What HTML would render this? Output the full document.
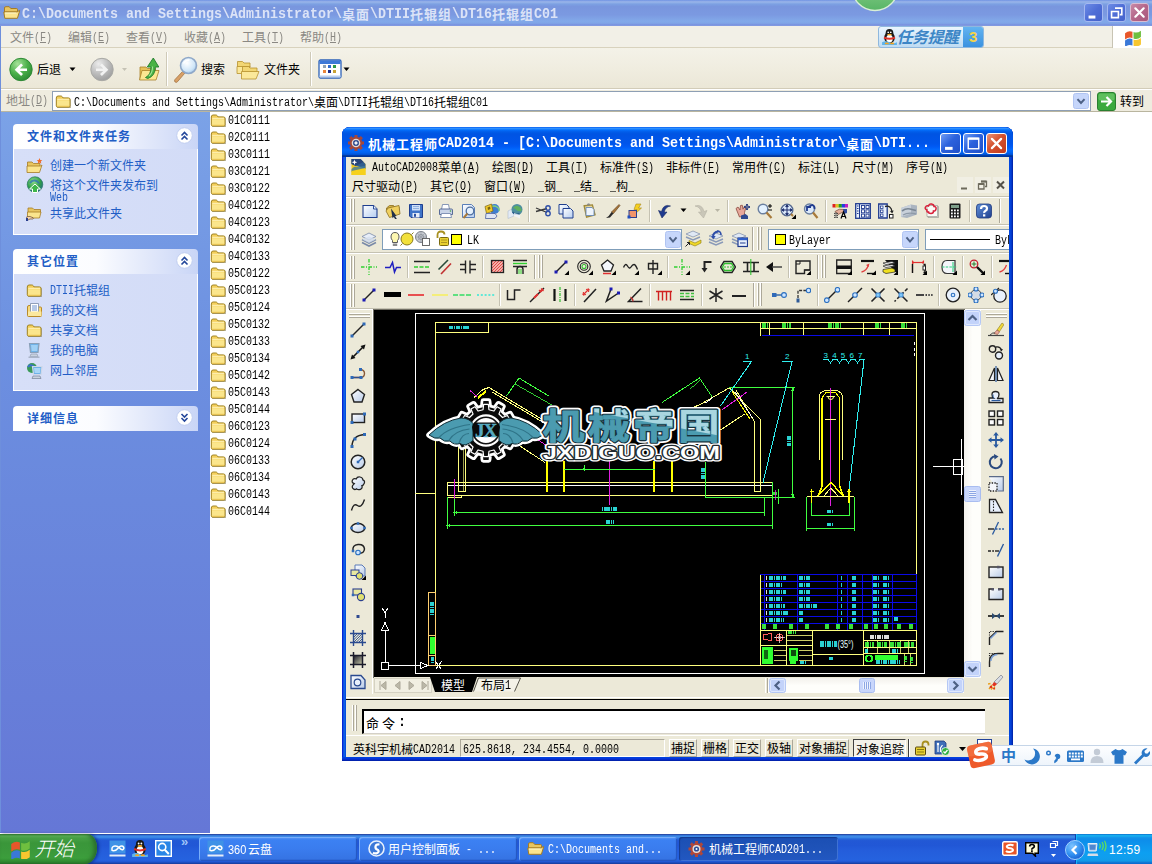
<!DOCTYPE html>
<html><head><meta charset="utf-8"><title>desktop</title><style>
*{margin:0;padding:0;box-sizing:border-box}
html,body{width:1152px;height:864px;overflow:hidden;background:#fff}
body{position:relative;font-family:"Liberation Sans",sans-serif;font-size:12px}
.a{position:absolute}
.m{position:absolute;font-family:"Liberation Mono",monospace;white-space:pre;transform-origin:0 0;line-height:1}
.t{font-family:"Liberation Sans","Noto Sans CJK SC",sans-serif}
u{text-decoration:underline;text-underline-offset:1px}
</style></head><body>
<div class="a" style="left:0px;top:0px;width:1152px;height:26px;background:linear-gradient(to bottom,#7697e7 0%,#7e9ee3 3%,#94afe8 6%,#97b4e9 8%,#82a5e4 14%,#7c9fe2 17%,#7996de 25%,#7b99e1 56%,#82a9e9 81%,#80a5e7 89%,#7b96e1 94%,#7a93df 97%,#8ea3e2 100%)"></div>
<svg class="a" style="left:3px;top:4px" width="18" height="17" viewBox="0 0 18 17"><path d="M1.5 4q0-1.3 1.3-1.3h3.4l1.6 1.8h5.6q1.1 0 1.1 1.1v2.4h-13z" fill="#e8c560" stroke="#a67c24" stroke-width="1"/><path d="M.8 8h13.2l2.6-1.6v.6l-2.2 7.3h-12.6z" fill="#fbe48d" stroke="#a67c24" stroke-width="1"/><path d="M2 9h11.5" stroke="#fff8cf" stroke-width="1"/></svg>
<span class="m" style="left:22px;top:7px;font-size:14px;color:#dbe3f7;transform:scaleX(0.9524);font-weight:bold">C:\Documents and Settings\Administrator\</span><svg class="a" style="left:342px;top:7px" width="30" height="16" overflow="visible" aria-label="桌面"><text class="t" x="0" y="11.5" font-size="13" font-weight="bold" letter-spacing="1" fill="#dbe3f7">桌面</text></svg><span class="m" style="left:370px;top:7px;font-size:14px;color:#dbe3f7;transform:scaleX(0.9524);font-weight:bold">\DTII</span><svg class="a" style="left:410px;top:7px" width="44" height="16" overflow="visible" aria-label="托辊组"><text class="t" x="0" y="11.5" font-size="13" font-weight="bold" letter-spacing="1" fill="#dbe3f7">托辊组</text></svg><span class="m" style="left:452px;top:7px;font-size:14px;color:#dbe3f7;transform:scaleX(0.9524);font-weight:bold">\DT16</span><svg class="a" style="left:492px;top:7px" width="44" height="16" overflow="visible" aria-label="托辊组"><text class="t" x="0" y="11.5" font-size="13" font-weight="bold" letter-spacing="1" fill="#dbe3f7">托辊组</text></svg><span class="m" style="left:534px;top:7px;font-size:14px;color:#dbe3f7;transform:scaleX(0.9524);font-weight:bold">C01</span>
<svg class="a" style="left:850px;top:0px" width="52" height="14" viewBox="0 0 52 14"><defs><linearGradient id="gc" x1="0" y1="0" x2="0" y2="1"><stop offset="0" stop-color="#a9dba1"/><stop offset="1" stop-color="#58b566"/></linearGradient></defs><circle cx="25" cy="-12.500" r="23" fill="url(#gc)" stroke="#d9efd6" stroke-width="1.400"/></svg>
<div class="a" style="left:1084px;top:3px;width:19px;height:19px;border-radius:3px;border:1px solid #a4b8f0;background:linear-gradient(135deg,#6c8ce6,#4f6ed6 50%,#4562cc)"><svg width="19" height="19" style="position:absolute;left:-1px;top:-1px"><rect x="4.56" y="12.54" width="6.84" height="3" fill="#fff"/></svg></div>
<div class="a" style="left:1107px;top:3px;width:19px;height:19px;border-radius:3px;border:1px solid #a4b8f0;background:linear-gradient(135deg,#6c8ce6,#4f6ed6 50%,#4562cc)"><svg width="19" height="19" style="position:absolute;left:-1px;top:-1px"><path d="M7.98 5.13h6.84v6.46h-2M4.56 8.55h6.84v6.08h-6.84z" fill="none" stroke="#fff" stroke-width="1.6"/></svg></div>
<div class="a" style="left:1130px;top:3px;width:19px;height:19px;border-radius:3px;border:1px solid #d9bdd2;background:linear-gradient(135deg,#c88aa6,#b5668a 50%,#a9587c)"><svg width="19" height="19" style="position:absolute;left:-1px;top:-1px"><path d="M5.32 5.32L13.68 13.68M13.68 5.32L5.32 13.68" stroke="#fff" stroke-width="2.2" stroke-linecap="round"/></svg></div>
<div class="a" style="left:0px;top:26px;width:1152px;height:22px;background:#f2f0e7;border-bottom:1px solid #d8d2bd"></div>
<svg class="a" style="left:10px;top:31px" width="26" height="15" overflow="visible" aria-label="文件"><text class="t" x="0" y="10.5" font-size="12" fill="#8a8883">文件</text></svg><span class="m" style="left:34px;top:32px;font-size:12px;color:#8a8883;transform:scaleX(0.8333)">(<u>F</u>)</span>
<svg class="a" style="left:68px;top:31px" width="26" height="15" overflow="visible" aria-label="编辑"><text class="t" x="0" y="10.5" font-size="12" fill="#8a8883">编辑</text></svg><span class="m" style="left:92px;top:32px;font-size:12px;color:#8a8883;transform:scaleX(0.8333)">(<u>E</u>)</span>
<svg class="a" style="left:126px;top:31px" width="26" height="15" overflow="visible" aria-label="查看"><text class="t" x="0" y="10.5" font-size="12" fill="#8a8883">查看</text></svg><span class="m" style="left:150px;top:32px;font-size:12px;color:#8a8883;transform:scaleX(0.8333)">(<u>V</u>)</span>
<svg class="a" style="left:184px;top:31px" width="26" height="15" overflow="visible" aria-label="收藏"><text class="t" x="0" y="10.5" font-size="12" fill="#8a8883">收藏</text></svg><span class="m" style="left:208px;top:32px;font-size:12px;color:#8a8883;transform:scaleX(0.8333)">(<u>A</u>)</span>
<svg class="a" style="left:242px;top:31px" width="26" height="15" overflow="visible" aria-label="工具"><text class="t" x="0" y="10.5" font-size="12" fill="#8a8883">工具</text></svg><span class="m" style="left:266px;top:32px;font-size:12px;color:#8a8883;transform:scaleX(0.8333)">(<u>T</u>)</span>
<svg class="a" style="left:300px;top:31px" width="26" height="15" overflow="visible" aria-label="帮助"><text class="t" x="0" y="10.5" font-size="12" fill="#8a8883">帮助</text></svg><span class="m" style="left:324px;top:32px;font-size:12px;color:#8a8883;transform:scaleX(0.8333)">(<u>H</u>)</span>
<div class="a" style="left:878px;top:26px;width:106px;height:22px;background:linear-gradient(#eaf5fd,#bfdcf3);border:1px solid #8fb8de;border-radius:3px"></div><div class="a" style="left:963px;top:27px;width:20px;height:20px;background:linear-gradient(#62b3f0,#3b92e0);border-radius:0 2px 2px 0"></div><svg class="a" style="left:881px;top:28px" width="17" height="17" viewBox="0 0 16 16"><ellipse cx="8" cy="9" rx="5" ry="5.500" fill="#1a1a1a"/><circle cx="8" cy="4.500" r="3.600" fill="#1a1a1a"/><ellipse cx="8" cy="10" rx="3" ry="3.600" fill="#fff"/><ellipse cx="8" cy="6.200" rx="2.200" ry=".9" fill="#f5a623"/><circle cx="6.800" cy="4" r=".8" fill="#fff"/><circle cx="9.200" cy="4" r=".8" fill="#fff"/><path d="M3 8q5 2.500 10 0l.5 1.800q-5.500 2.500-11 0z" fill="#e0342a"/><path d="M1 13.500q3.500-2 7 0t7 0v2.500h-14z" fill="#5fb4ec"/><ellipse cx="5.500" cy="14.500" rx="2" ry=".9" fill="#f5a623"/><ellipse cx="10.500" cy="14.500" rx="2" ry=".9" fill="#f5a623"/></svg><svg class="a" style="left:900px;top:29px" width="64" height="19" overflow="visible" aria-label="任务提醒"><g fill="#3d86c6" transform="skewX(-14)"><text class="t" x="0" y="14" font-size="16" font-weight="bold" letter-spacing="-0.5" fill="#3d86c6">任务提醒</text></g></svg><span class="a" style="left:969px;top:28px;font:bold 15px 'Liberation Sans',sans-serif;color:#f5d34a">3</span>
<div class="a" style="left:1112px;top:26px;width:40px;height:22px;background:#fff;border-left:1px solid #c8c4b4"></div>
<svg class="a" style="left:1124px;top:28px" width="18" height="18" viewBox="0 0 17 17"><g transform="skewY(-8) translate(0,2.5)"><path d="M1 2.5q3.5-2.4 7-.3v6q-3.5-2-7 .3z" fill="#e8562a"/><path d="M9 2.6q3.5 2 7-.3v6q-3.5 2.3-7 .3z" fill="#6fbf3f"/><path d="M1 9.5q3.5-2.4 7-.3v6q-3.5-2-7 .3z" fill="#3a78d8"/><path d="M9 9.6q3.5 2 7-.3v6q-3.5 2.3-7 .3z" fill="#f7c62f"/></g></svg>
<div class="a" style="left:0px;top:48px;width:1152px;height:41px;background:linear-gradient(to bottom,#f4f2e8 0%,#f0ede0 50%,#ebe7d7 100%);border-bottom:1px solid #d2ccb8"></div>
<svg class="a" style="left:9px;top:57px" width="24" height="25" viewBox="0 0 24 25"><defs><radialGradient id="u1" cx="35%" cy="25%" r="80%"><stop offset="0" stop-color="#a6e29a"/><stop offset=".55" stop-color="#4bb04a"/><stop offset="1" stop-color="#2c8a34"/></radialGradient></defs><circle cx="12" cy="12.5" r="11.2" fill="url(#u1)" stroke="#2f8a36" stroke-width="1"/><path d="M18 11.5h-7.2l3.2-3.2-1.9-1.9-6.4 6.3 6.4 6.3 1.9-1.9-3.2-3.2h7.2z" fill="#fff"/></svg>
<svg class="a" style="left:37px;top:63px" width="26" height="15" overflow="visible" aria-label="后退"><text class="t" x="0" y="10.5" font-size="12" fill="#000">后退</text></svg>
<svg class="a" style="left:69px;top:67px" width="8" height="5" viewBox="0 0 8 5"><path d="M0.5 0.5h6l-3 3.5z" fill="#000"/></svg>
<svg class="a" style="left:90px;top:57px" width="24" height="25" viewBox="0 0 24 25"><defs><radialGradient id="u2" cx="35%" cy="25%" r="80%"><stop offset="0" stop-color="#ececec"/><stop offset=".55" stop-color="#bdbdbd"/><stop offset="1" stop-color="#9c9c9c"/></radialGradient></defs><circle cx="12" cy="12.5" r="11.2" fill="url(#u2)" stroke="#a9a9a5" stroke-width="1"/><path d="M6 11.5h7.2l-3.2-3.2 1.9-1.9 6.4 6.3-6.4 6.3-1.9-1.9 3.2-3.2h-7.2z" fill="#f2f2f2"/></svg>
<svg class="a" style="left:121px;top:67px" width="8" height="5" viewBox="0 0 8 5"><path d="M1 1h5l-2.500 3z" fill="#c5c2b5"/></svg>
<svg class="a" style="left:138px;top:56px" width="22" height="25" viewBox="0 0 22 25"><path d="M2 11h6l1.500 1.500h8v11h-15.500z" fill="#e6c258" stroke="#a8802a" stroke-width=".8"/><path d="M1.500 24l2.500-9.500h17l-3 9.500z" fill="#fbe792" stroke="#a8802a" stroke-width=".8"/><path d="M7.500 21.500q5.500-2.500 5.500-10.500h-3.700l6-9 5.500 9h-3.500q0 9-7.500 11.500z" fill="#49b345" stroke="#1f7a2a" stroke-width=".9"/><path d="M14.500 10.500q.3 6-3.500 9.500" stroke="#a4e497" stroke-width="1.100" fill="none"/></svg>
<div class="a" style="left:166px;top:52px;width:1px;height:34px;background:#cfcab8;border-right:1px solid #fff;width:2px"></div>
<svg class="a" style="left:172px;top:56px" width="28" height="28" viewBox="0 0 28 28"><defs><radialGradient id="u3" cx="40%" cy="35%" r="70%"><stop offset="0" stop-color="#fff"/><stop offset=".7" stop-color="#cfe6f8"/><stop offset="1" stop-color="#9cc4ea"/></radialGradient></defs><path d="M10.500 15.500l-7.500 8q-1.200 1.600.2 2.600 1.300.8 2.500-.6l7-8.200z" fill="#d9a066" stroke="#9a6a3a" stroke-width=".7"/><circle cx="16.500" cy="9.500" r="8" fill="url(#u3)" stroke="#8fa8c8" stroke-width="1.600"/><path d="M11.500 7.500q2-3.500 6-3.500" stroke="#fff" stroke-width="1.500" fill="none"/></svg>
<svg class="a" style="left:201px;top:63px" width="26" height="15" overflow="visible" aria-label="搜索"><text class="t" x="0" y="10.5" font-size="12" fill="#000">搜索</text></svg>
<svg class="a" style="left:236px;top:58px" width="24" height="22" viewBox="0 0 24 22"><path d="M1.500 3.500h5l1.500 1.500h6v4h-12.500z" fill="#f2d673" stroke="#b8922f" stroke-width=".8"/><path d="M1 8.500h13l-1.500 7h-11.500z" fill="#fbe89a" stroke="#b8922f" stroke-width=".8"/><path d="M6.500 8.500h6l1.500 1.500h7v4h-14.500z" fill="#f2d673" stroke="#b8922f" stroke-width=".8"/><path d="M5.500 13.500h17.500l-3 7.500h-14.500z" fill="#fbe89a" stroke="#b8922f" stroke-width=".8"/></svg>
<svg class="a" style="left:264px;top:63px" width="38" height="15" overflow="visible" aria-label="文件夹"><text class="t" x="0" y="10.5" font-size="12" fill="#000">文件夹</text></svg>
<div class="a" style="left:310px;top:52px;width:1px;height:34px;background:#cfcab8;border-right:1px solid #fff;width:2px"></div>
<svg class="a" style="left:318px;top:59px" width="24" height="20" viewBox="0 0 24 20"><rect x="1" y="1" width="22" height="18" rx="1.500" fill="#fff" stroke="#2d62b8" stroke-width="1.300"/><rect x="1.500" y="1.500" width="21" height="3.500" fill="#3d79d8"/><rect x="1.500" y="16.500" width="21" height="2" fill="#bcd0ee"/><rect x="5" y="6" width="3" height="3" fill="#8fa3b4"/><rect x="10" y="6" width="3" height="3" fill="#2e6bd0"/><rect x="15" y="6" width="3" height="3" fill="#2f9a48"/><rect x="5" y="11" width="3" height="3" fill="#e9843a"/><rect x="10" y="11" width="3" height="3" fill="#1c2d8c"/><rect x="15" y="11" width="3" height="3" fill="#c9a233"/></svg>
<svg class="a" style="left:343px;top:67px" width="8" height="5" viewBox="0 0 8 5"><path d="M0.5 0.5h6l-3 3.5z" fill="#000"/></svg>
<div class="a" style="left:0px;top:89px;width:1152px;height:23px;background:#efecdf;border-top:1px solid #fff;border-bottom:1px solid #b9b59f"></div>
<svg class="a" style="left:6px;top:94px" width="26" height="15" overflow="visible" aria-label="地址"><text class="t" x="0" y="10.5" font-size="12" fill="#8a8883">地址</text></svg><span class="m" style="left:30px;top:95px;font-size:12px;color:#8a8883;transform:scaleX(0.8333)">(<u>D</u>)</span>
<div class="a" style="left:52px;top:91px;width:1039px;height:20px;background:#fff;border:1px solid #8e9fb4"></div>
<svg class="a" style="left:55px;top:93px" width="17" height="16" viewBox="0 0 17 16"><path d="M1.500 14.300v-9.300q0-2 1.800-2h2.700q1 0 1.700 1l.6.900h5.500q1.400 0 1.400 1.400v8z" fill="#6f5d1c" opacity=".55" transform="translate(.6 .7)"/><path d="M1.300 5q0-2 1.800-2h2.700q1 0 1.700 1l.6.900h5.400q1.400 0 1.400 1.400v6.500q0 1.200-1.200 1.200h-11.200q-1.200 0-1.200-1.200z" fill="#f4cf5a" stroke="#a08424" stroke-width="1"/><path d="M2 7.300h12.400v5.500q0 .7-.7.700h-11q-.7 0-.7-.7z" fill="#fbe68c"/><path d="M2.200 6.300h12" stroke="#fff4c0" stroke-width="1"/><path d="M2 13.300h12.300" stroke="#e9c24f" stroke-width="1"/></svg>
<span class="m" style="left:74px;top:97px;font-size:12px;color:#000;transform:scaleX(0.8333)">C:\Documents and Settings\Administrator\</span><svg class="a" style="left:314px;top:96px" width="26" height="15" overflow="visible" aria-label="桌面"><text class="t" x="0" y="10.5" font-size="12" fill="#000">桌面</text></svg><span class="m" style="left:338px;top:97px;font-size:12px;color:#000;transform:scaleX(0.8333)">\DTII</span><svg class="a" style="left:368px;top:96px" width="38" height="15" overflow="visible" aria-label="托辊组"><text class="t" x="0" y="10.5" font-size="12" fill="#000">托辊组</text></svg><span class="m" style="left:404px;top:97px;font-size:12px;color:#000;transform:scaleX(0.8333)">\DT16</span><svg class="a" style="left:434px;top:96px" width="38" height="15" overflow="visible" aria-label="托辊组"><text class="t" x="0" y="10.5" font-size="12" fill="#000">托辊组</text></svg><span class="m" style="left:470px;top:97px;font-size:12px;color:#000;transform:scaleX(0.8333)">C01</span>
<svg class="a" style="left:1073px;top:93px" width="16" height="16" viewBox="0 0 16 16" style="left:1073px;top:93px;background:linear-gradient(#d9e4fd,#b4c9f7);border-radius:2px"><rect x=".5" y=".5" width="15" height="15" rx="2" fill="#c6d6fb" stroke="#b0c4f2"/><path d="M4.48 6.08l3.52 3.84l3.52 -3.84" fill="none" stroke="#4d6185" stroke-width="2"/></svg>
<svg class="a" style="left:1097px;top:92px" width="19" height="19" viewBox="0 0 19 19"><rect x=".5" y=".5" width="18" height="18" rx="2.500" fill="#3ba93e" stroke="#2a7f2f"/><rect x="1.500" y="1.500" width="16" height="7" rx="2" fill="#6fc96b" opacity=".7"/><path d="M4 9.500h9M9.500 5l4.500 4.500-4.500 4.500" fill="none" stroke="#fff" stroke-width="2.200"/></svg>
<svg class="a" style="left:1120px;top:95px" width="26" height="15" overflow="visible" aria-label="转到"><text class="t" x="0" y="10.5" font-size="12" fill="#000">转到</text></svg>
<div class="a" style="left:0px;top:112px;width:210px;height:722px;background:linear-gradient(to bottom,#7ba2e7 0%,#6c8fe0 35%,#6577d6 100%)"></div>
<div class="a" style="left:0px;top:26px;width:1px;height:808px;background:#6e8fdc"></div>
<div class="a" style="left:13px;top:124px;width:185px;height:25px;background:linear-gradient(to right,#ffffff 0%,#fbfcff 45%,#c9d5f6 100%);border-radius:4px 4px 0 0"></div>
<svg class="a" style="left:27px;top:130px" width="106" height="15" overflow="visible" aria-label="文件和文件夹任务"><text class="t" x="0" y="10.5" font-size="12" font-weight="bold" letter-spacing="1" fill="#215dc6">文件和文件夹任务</text></svg>
<svg class="a" style="left:176px;top:127px" width="17" height="17" viewBox="0 0 17 17"><circle cx="8.500" cy="8.500" r="7.800" fill="#fff" stroke="#c1cef0" stroke-width="1"/><path d="M5.500 8.500l3-3 3 3M5.500 12.500l3-3 3 3" fill="none" stroke="#23469a" stroke-width="1.600"/></svg>
<div class="a" style="left:13px;top:149px;width:185px;height:86px;background:linear-gradient(to right,#d7dff8,#d3dcf7);border:1px solid #fff;border-top:0"></div>
<svg class="a" style="left:26px;top:157px" width="17" height="17" viewBox="0 0 17 17"><path d="M1.500 5h4.500l1.500 1.500h6.500v3h-12.500z" fill="#e8c560" stroke="#a67c24" stroke-width=".8"/><path d="M1 9h13.500l1.500-1-2.500 7.500h-12.500z" fill="#fbe48d" stroke="#a67c24" stroke-width=".8"/><path d="M13.500 1l.8 2 2 .2-1.500 1.300.5 2-1.800-1.100-1.800 1.100.5-2-1.500-1.300 2-.2z" fill="#f06a28"/></svg>
<svg class="a" style="left:50px;top:159px" width="98" height="15" overflow="visible" aria-label="创建一个新文件夹"><text class="t" x="0" y="10.5" font-size="12" fill="#215dc6">创建一个新文件夹</text></svg>
<svg class="a" style="left:26px;top:176px" width="18" height="18" viewBox="0 0 18 18"><defs><radialGradient id="u4" cx="40%" cy="30%" r="75%"><stop offset="0" stop-color="#8fe08a"/><stop offset=".6" stop-color="#2f9d4a"/><stop offset="1" stop-color="#1f6a8a"/></radialGradient></defs><circle cx="9" cy="8.500" r="7.800" fill="url(#u4)" stroke="#1f6a5a" stroke-width=".6"/><path d="M4 7q2-3 5-2.500t4 3" stroke="#2a65c0" stroke-width="2" fill="none" opacity=".7"/><path d="M9 8l5.500 5h-3v3.500h-5v-3.500h-3z" fill="#3fb64a" stroke="#fff" stroke-width="1"/></svg>
<svg class="a" style="left:50px;top:179px" width="110" height="15" overflow="visible" aria-label="将这个文件夹发布到"><text class="t" x="0" y="10.5" font-size="12" fill="#215dc6">将这个文件夹发布到</text></svg>
<span class="m" style="left:50px;top:192px;font-size:12px;color:#215dc6;transform:scaleX(0.8333)">Web</span>
<svg class="a" style="left:26px;top:204px" width="17" height="17" viewBox="0 0 17 17"><path d="M2 4h4.500l1.500 1.500h6.500v3h-12.500z" fill="#e8c560" stroke="#a67c24" stroke-width=".8"/><path d="M1.500 8h13.500l-1.500 6h-12z" fill="#fbe48d" stroke="#a67c24" stroke-width=".8"/><path d="M0 13.500q2-1.500 4-1l3 1.200q1 .6 0 1.300h-3l-3 1.500z" fill="#f3d3b0" stroke="#6a4a30" stroke-width=".7"/><path d="M0 14h2v3h-2z" fill="#2a3f8f"/></svg>
<svg class="a" style="left:50px;top:207px" width="74" height="15" overflow="visible" aria-label="共享此文件夹"><text class="t" x="0" y="10.5" font-size="12" fill="#215dc6">共享此文件夹</text></svg>
<div class="a" style="left:13px;top:249px;width:185px;height:25px;background:linear-gradient(to right,#ffffff 0%,#fbfcff 45%,#c9d5f6 100%);border-radius:4px 4px 0 0"></div>
<svg class="a" style="left:27px;top:255px" width="54" height="15" overflow="visible" aria-label="其它位置"><text class="t" x="0" y="10.5" font-size="12" font-weight="bold" letter-spacing="1" fill="#215dc6">其它位置</text></svg>
<svg class="a" style="left:176px;top:252px" width="17" height="17" viewBox="0 0 17 17"><circle cx="8.500" cy="8.500" r="7.800" fill="#fff" stroke="#c1cef0" stroke-width="1"/><path d="M5.500 8.500l3-3 3 3M5.500 12.500l3-3 3 3" fill="none" stroke="#23469a" stroke-width="1.600"/></svg>
<div class="a" style="left:13px;top:274px;width:185px;height:117px;background:linear-gradient(to right,#d7dff8,#d3dcf7);border:1px solid #fff;border-top:0"></div>
<svg class="a" style="left:26px;top:282px" width="17" height="16" viewBox="0 0 17 16"><path d="M1.500 14.300v-9.300q0-2 1.800-2h2.700q1 0 1.700 1l.6.900h5.500q1.400 0 1.400 1.400v8z" fill="#6f5d1c" opacity=".55" transform="translate(.6 .7)"/><path d="M1.300 5q0-2 1.800-2h2.700q1 0 1.700 1l.6.900h5.400q1.400 0 1.400 1.400v6.500q0 1.200-1.200 1.200h-11.200q-1.200 0-1.200-1.200z" fill="#f4cf5a" stroke="#a08424" stroke-width="1"/><path d="M2 7.300h12.400v5.500q0 .7-.7.700h-11q-.7 0-.7-.7z" fill="#fbe68c"/><path d="M2.200 6.300h12" stroke="#fff4c0" stroke-width="1"/><path d="M2 13.300h12.300" stroke="#e9c24f" stroke-width="1"/></svg>
<span class="m" style="left:50px;top:285px;font-size:12px;color:#215dc6;transform:scaleX(0.8333)">DTII</span><svg class="a" style="left:74px;top:284px" width="38" height="15" overflow="visible" aria-label="托辊组"><text class="t" x="0" y="10.5" font-size="12" fill="#215dc6">托辊组</text></svg>
<svg class="a" style="left:26px;top:302px" width="17" height="16" viewBox="0 0 17 16"><path d="M1.500 5q0-1.500 1.500-1.500h3l1.500 1.500h7q1 0 1 1v7.500q0 1-1 1h-12q-1 0-1-1z" fill="#f7d97a" stroke="#b88a2a"/><path d="M4.500 1.500h8v9h-8z" fill="#fff" stroke="#7a8aa8" stroke-width=".8"/><path d="M6 4h5M6 6h5M6 8h5" stroke="#5b87c9" stroke-width=".9"/><path d="M2 9.500h13.500v4q0 .5-.5.500h-12.500q-.5 0-.5-.5z" fill="#fbe89e"/></svg>
<svg class="a" style="left:50px;top:304px" width="50" height="15" overflow="visible" aria-label="我的文档"><text class="t" x="0" y="10.5" font-size="12" fill="#215dc6">我的文档</text></svg>
<svg class="a" style="left:26px;top:322px" width="17" height="16" viewBox="0 0 17 16"><path d="M1.500 14.300v-9.300q0-2 1.800-2h2.700q1 0 1.700 1l.6.900h5.500q1.400 0 1.400 1.400v8z" fill="#6f5d1c" opacity=".55" transform="translate(.6 .7)"/><path d="M1.300 5q0-2 1.800-2h2.700q1 0 1.700 1l.6.900h5.400q1.400 0 1.400 1.400v6.500q0 1.200-1.200 1.200h-11.200q-1.200 0-1.200-1.200z" fill="#f4cf5a" stroke="#a08424" stroke-width="1"/><path d="M2 7.300h12.400v5.500q0 .7-.7.700h-11q-.7 0-.7-.7z" fill="#fbe68c"/><path d="M2.200 6.300h12" stroke="#fff4c0" stroke-width="1"/><path d="M2 13.300h12.300" stroke="#e9c24f" stroke-width="1"/></svg>
<svg class="a" style="left:50px;top:324px" width="50" height="15" overflow="visible" aria-label="共享文档"><text class="t" x="0" y="10.5" font-size="12" fill="#215dc6">共享文档</text></svg>
<svg class="a" style="left:26px;top:342px" width="17" height="17" viewBox="0 0 17 17"><path d="M3.500 1.500h9.500l-1 9h-7.500z" fill="#6fb2e8" stroke="#8aa0b8" stroke-width="1.200"/><path d="M5 3h6.800l-.6 6h-5.500z" fill="#9fd0f5"/><path d="M5 12h6l1 2.500h-8z" fill="#c9d3e0" stroke="#8a94a8" stroke-width=".6"/><path d="M2.500 14.500h11v1.500h-11z" fill="#aab4c8"/></svg>
<svg class="a" style="left:50px;top:344px" width="50" height="15" overflow="visible" aria-label="我的电脑"><text class="t" x="0" y="10.5" font-size="12" fill="#215dc6">我的电脑</text></svg>
<svg class="a" style="left:26px;top:362px" width="18" height="18" viewBox="0 0 18 18"><circle cx="6" cy="6" r="5" fill="#3a9a58"/><path d="M2 5q2-3 5-1t3 3" stroke="#3a6fd0" stroke-width="2" fill="none"/><path d="M6.500 4.500h9.500l-1 8h-7.500z" fill="#6fb2e8" stroke="#cfd8e8" stroke-width="1.200"/><path d="M8 6h6.500l-.6 5h-5.200z" fill="#a9d6f7"/><path d="M7 14h7l1 2.500h-9z" fill="#c9d3e0" stroke="#6a748a" stroke-width=".6"/></svg>
<svg class="a" style="left:50px;top:364px" width="50" height="15" overflow="visible" aria-label="网上邻居"><text class="t" x="0" y="10.5" font-size="12" fill="#215dc6">网上邻居</text></svg>
<div class="a" style="left:13px;top:406px;width:185px;height:25px;background:linear-gradient(to right,#ffffff 0%,#fbfcff 45%,#c9d5f6 100%);border-radius:4px 4px 0 0;border-radius:4px 4px 0 0"></div>
<svg class="a" style="left:27px;top:412px" width="54" height="15" overflow="visible" aria-label="详细信息"><text class="t" x="0" y="10.5" font-size="12" font-weight="bold" letter-spacing="1" fill="#215dc6">详细信息</text></svg>
<svg class="a" style="left:176px;top:409px" width="17" height="17" viewBox="0 0 17 17"><circle cx="8.500" cy="8.500" r="7.800" fill="#fff" stroke="#c1cef0" stroke-width="1"/><path d="M5.500 5l3 3 3-3M5.500 9l3 3 3-3" fill="none" stroke="#23469a" stroke-width="1.600"/></svg>
<svg class="a" style="left:210px;top:112px" width="17" height="16" viewBox="0 0 17 16"><path d="M1.500 14.300v-9.300q0-2 1.800-2h2.700q1 0 1.700 1l.6.900h5.500q1.400 0 1.400 1.400v8z" fill="#6f5d1c" opacity=".55" transform="translate(.6 .7)"/><path d="M1.300 5q0-2 1.800-2h2.700q1 0 1.700 1l.6.900h5.400q1.400 0 1.400 1.400v6.500q0 1.200-1.200 1.200h-11.200q-1.200 0-1.200-1.200z" fill="#f4cf5a" stroke="#a08424" stroke-width="1"/><path d="M2 7.300h12.400v5.500q0 .7-.7.700h-11q-.7 0-.7-.7z" fill="#fbe68c"/><path d="M2.200 6.300h12" stroke="#fff4c0" stroke-width="1"/><path d="M2 13.300h12.300" stroke="#e9c24f" stroke-width="1"/></svg>
<span class="m" style="left:228px;top:115px;font-size:12px;color:#000;transform:scaleX(0.8333)">01C0111</span>
<svg class="a" style="left:210px;top:129px" width="17" height="16" viewBox="0 0 17 16"><path d="M1.500 14.300v-9.300q0-2 1.800-2h2.700q1 0 1.700 1l.6.900h5.500q1.400 0 1.400 1.400v8z" fill="#6f5d1c" opacity=".55" transform="translate(.6 .7)"/><path d="M1.300 5q0-2 1.800-2h2.700q1 0 1.700 1l.6.900h5.400q1.400 0 1.400 1.400v6.500q0 1.200-1.200 1.200h-11.200q-1.200 0-1.200-1.200z" fill="#f4cf5a" stroke="#a08424" stroke-width="1"/><path d="M2 7.300h12.400v5.500q0 .7-.7.700h-11q-.7 0-.7-.7z" fill="#fbe68c"/><path d="M2.200 6.300h12" stroke="#fff4c0" stroke-width="1"/><path d="M2 13.300h12.300" stroke="#e9c24f" stroke-width="1"/></svg>
<span class="m" style="left:228px;top:132px;font-size:12px;color:#000;transform:scaleX(0.8333)">02C0111</span>
<svg class="a" style="left:210px;top:146px" width="17" height="16" viewBox="0 0 17 16"><path d="M1.500 14.300v-9.300q0-2 1.800-2h2.700q1 0 1.700 1l.6.900h5.500q1.400 0 1.400 1.400v8z" fill="#6f5d1c" opacity=".55" transform="translate(.6 .7)"/><path d="M1.300 5q0-2 1.800-2h2.700q1 0 1.700 1l.6.900h5.400q1.400 0 1.400 1.400v6.500q0 1.200-1.200 1.200h-11.200q-1.200 0-1.200-1.200z" fill="#f4cf5a" stroke="#a08424" stroke-width="1"/><path d="M2 7.300h12.400v5.500q0 .7-.7.700h-11q-.7 0-.7-.7z" fill="#fbe68c"/><path d="M2.200 6.300h12" stroke="#fff4c0" stroke-width="1"/><path d="M2 13.300h12.300" stroke="#e9c24f" stroke-width="1"/></svg>
<span class="m" style="left:228px;top:149px;font-size:12px;color:#000;transform:scaleX(0.8333)">03C0111</span>
<svg class="a" style="left:210px;top:163px" width="17" height="16" viewBox="0 0 17 16"><path d="M1.500 14.300v-9.300q0-2 1.800-2h2.700q1 0 1.700 1l.6.900h5.500q1.400 0 1.400 1.400v8z" fill="#6f5d1c" opacity=".55" transform="translate(.6 .7)"/><path d="M1.300 5q0-2 1.800-2h2.700q1 0 1.700 1l.6.900h5.400q1.400 0 1.400 1.400v6.500q0 1.200-1.200 1.200h-11.200q-1.200 0-1.200-1.200z" fill="#f4cf5a" stroke="#a08424" stroke-width="1"/><path d="M2 7.300h12.400v5.500q0 .7-.7.700h-11q-.7 0-.7-.7z" fill="#fbe68c"/><path d="M2.200 6.300h12" stroke="#fff4c0" stroke-width="1"/><path d="M2 13.300h12.300" stroke="#e9c24f" stroke-width="1"/></svg>
<span class="m" style="left:228px;top:166px;font-size:12px;color:#000;transform:scaleX(0.8333)">03C0121</span>
<svg class="a" style="left:210px;top:180px" width="17" height="16" viewBox="0 0 17 16"><path d="M1.500 14.300v-9.300q0-2 1.800-2h2.700q1 0 1.700 1l.6.900h5.500q1.400 0 1.400 1.400v8z" fill="#6f5d1c" opacity=".55" transform="translate(.6 .7)"/><path d="M1.300 5q0-2 1.800-2h2.700q1 0 1.700 1l.6.900h5.400q1.400 0 1.400 1.400v6.500q0 1.200-1.200 1.200h-11.200q-1.200 0-1.200-1.200z" fill="#f4cf5a" stroke="#a08424" stroke-width="1"/><path d="M2 7.300h12.400v5.500q0 .7-.7.700h-11q-.7 0-.7-.7z" fill="#fbe68c"/><path d="M2.200 6.300h12" stroke="#fff4c0" stroke-width="1"/><path d="M2 13.300h12.300" stroke="#e9c24f" stroke-width="1"/></svg>
<span class="m" style="left:228px;top:183px;font-size:12px;color:#000;transform:scaleX(0.8333)">03C0122</span>
<svg class="a" style="left:210px;top:197px" width="17" height="16" viewBox="0 0 17 16"><path d="M1.500 14.300v-9.300q0-2 1.800-2h2.700q1 0 1.700 1l.6.900h5.500q1.400 0 1.400 1.400v8z" fill="#6f5d1c" opacity=".55" transform="translate(.6 .7)"/><path d="M1.300 5q0-2 1.800-2h2.700q1 0 1.700 1l.6.900h5.400q1.400 0 1.400 1.400v6.500q0 1.200-1.200 1.200h-11.200q-1.200 0-1.200-1.200z" fill="#f4cf5a" stroke="#a08424" stroke-width="1"/><path d="M2 7.300h12.400v5.500q0 .7-.7.700h-11q-.7 0-.7-.7z" fill="#fbe68c"/><path d="M2.200 6.300h12" stroke="#fff4c0" stroke-width="1"/><path d="M2 13.300h12.300" stroke="#e9c24f" stroke-width="1"/></svg>
<span class="m" style="left:228px;top:200px;font-size:12px;color:#000;transform:scaleX(0.8333)">04C0122</span>
<svg class="a" style="left:210px;top:214px" width="17" height="16" viewBox="0 0 17 16"><path d="M1.500 14.300v-9.300q0-2 1.800-2h2.700q1 0 1.700 1l.6.900h5.500q1.400 0 1.400 1.400v8z" fill="#6f5d1c" opacity=".55" transform="translate(.6 .7)"/><path d="M1.300 5q0-2 1.800-2h2.700q1 0 1.700 1l.6.900h5.400q1.400 0 1.400 1.400v6.500q0 1.200-1.200 1.200h-11.200q-1.200 0-1.200-1.200z" fill="#f4cf5a" stroke="#a08424" stroke-width="1"/><path d="M2 7.300h12.400v5.500q0 .7-.7.700h-11q-.7 0-.7-.7z" fill="#fbe68c"/><path d="M2.200 6.300h12" stroke="#fff4c0" stroke-width="1"/><path d="M2 13.300h12.300" stroke="#e9c24f" stroke-width="1"/></svg>
<span class="m" style="left:228px;top:217px;font-size:12px;color:#000;transform:scaleX(0.8333)">04C0123</span>
<svg class="a" style="left:210px;top:231px" width="17" height="16" viewBox="0 0 17 16"><path d="M1.500 14.300v-9.300q0-2 1.800-2h2.700q1 0 1.700 1l.6.900h5.500q1.400 0 1.400 1.400v8z" fill="#6f5d1c" opacity=".55" transform="translate(.6 .7)"/><path d="M1.300 5q0-2 1.800-2h2.700q1 0 1.700 1l.6.900h5.400q1.400 0 1.400 1.400v6.500q0 1.200-1.200 1.200h-11.200q-1.200 0-1.200-1.200z" fill="#f4cf5a" stroke="#a08424" stroke-width="1"/><path d="M2 7.300h12.400v5.500q0 .7-.7.700h-11q-.7 0-.7-.7z" fill="#fbe68c"/><path d="M2.200 6.300h12" stroke="#fff4c0" stroke-width="1"/><path d="M2 13.300h12.300" stroke="#e9c24f" stroke-width="1"/></svg>
<span class="m" style="left:228px;top:234px;font-size:12px;color:#000;transform:scaleX(0.8333)">04C0132</span>
<svg class="a" style="left:210px;top:248px" width="17" height="16" viewBox="0 0 17 16"><path d="M1.500 14.300v-9.300q0-2 1.800-2h2.700q1 0 1.700 1l.6.900h5.500q1.400 0 1.400 1.400v8z" fill="#6f5d1c" opacity=".55" transform="translate(.6 .7)"/><path d="M1.300 5q0-2 1.800-2h2.700q1 0 1.700 1l.6.900h5.400q1.400 0 1.400 1.400v6.500q0 1.200-1.200 1.200h-11.200q-1.200 0-1.200-1.200z" fill="#f4cf5a" stroke="#a08424" stroke-width="1"/><path d="M2 7.300h12.400v5.500q0 .7-.7.700h-11q-.7 0-.7-.7z" fill="#fbe68c"/><path d="M2.200 6.300h12" stroke="#fff4c0" stroke-width="1"/><path d="M2 13.300h12.300" stroke="#e9c24f" stroke-width="1"/></svg>
<span class="m" style="left:228px;top:251px;font-size:12px;color:#000;transform:scaleX(0.8333)">04C0133</span>
<svg class="a" style="left:210px;top:265px" width="17" height="16" viewBox="0 0 17 16"><path d="M1.500 14.300v-9.300q0-2 1.800-2h2.700q1 0 1.700 1l.6.900h5.500q1.400 0 1.400 1.400v8z" fill="#6f5d1c" opacity=".55" transform="translate(.6 .7)"/><path d="M1.300 5q0-2 1.800-2h2.700q1 0 1.700 1l.6.900h5.400q1.400 0 1.400 1.400v6.500q0 1.200-1.200 1.200h-11.200q-1.200 0-1.200-1.200z" fill="#f4cf5a" stroke="#a08424" stroke-width="1"/><path d="M2 7.300h12.400v5.500q0 .7-.7.700h-11q-.7 0-.7-.7z" fill="#fbe68c"/><path d="M2.200 6.300h12" stroke="#fff4c0" stroke-width="1"/><path d="M2 13.300h12.300" stroke="#e9c24f" stroke-width="1"/></svg>
<span class="m" style="left:228px;top:268px;font-size:12px;color:#000;transform:scaleX(0.8333)">05C0122</span>
<svg class="a" style="left:210px;top:282px" width="17" height="16" viewBox="0 0 17 16"><path d="M1.500 14.300v-9.300q0-2 1.800-2h2.700q1 0 1.700 1l.6.900h5.500q1.400 0 1.400 1.400v8z" fill="#6f5d1c" opacity=".55" transform="translate(.6 .7)"/><path d="M1.300 5q0-2 1.800-2h2.700q1 0 1.700 1l.6.900h5.400q1.400 0 1.400 1.400v6.500q0 1.200-1.200 1.200h-11.200q-1.200 0-1.200-1.200z" fill="#f4cf5a" stroke="#a08424" stroke-width="1"/><path d="M2 7.300h12.400v5.500q0 .7-.7.700h-11q-.7 0-.7-.7z" fill="#fbe68c"/><path d="M2.200 6.300h12" stroke="#fff4c0" stroke-width="1"/><path d="M2 13.300h12.300" stroke="#e9c24f" stroke-width="1"/></svg>
<span class="m" style="left:228px;top:285px;font-size:12px;color:#000;transform:scaleX(0.8333)">05C0123</span>
<svg class="a" style="left:210px;top:299px" width="17" height="16" viewBox="0 0 17 16"><path d="M1.500 14.300v-9.300q0-2 1.800-2h2.700q1 0 1.700 1l.6.900h5.500q1.400 0 1.400 1.400v8z" fill="#6f5d1c" opacity=".55" transform="translate(.6 .7)"/><path d="M1.300 5q0-2 1.800-2h2.700q1 0 1.700 1l.6.900h5.400q1.400 0 1.400 1.400v6.500q0 1.200-1.200 1.200h-11.200q-1.200 0-1.200-1.200z" fill="#f4cf5a" stroke="#a08424" stroke-width="1"/><path d="M2 7.300h12.400v5.500q0 .7-.7.700h-11q-.7 0-.7-.7z" fill="#fbe68c"/><path d="M2.200 6.300h12" stroke="#fff4c0" stroke-width="1"/><path d="M2 13.300h12.300" stroke="#e9c24f" stroke-width="1"/></svg>
<span class="m" style="left:228px;top:302px;font-size:12px;color:#000;transform:scaleX(0.8333)">05C0124</span>
<svg class="a" style="left:210px;top:316px" width="17" height="16" viewBox="0 0 17 16"><path d="M1.500 14.300v-9.300q0-2 1.800-2h2.700q1 0 1.700 1l.6.900h5.500q1.400 0 1.400 1.400v8z" fill="#6f5d1c" opacity=".55" transform="translate(.6 .7)"/><path d="M1.300 5q0-2 1.800-2h2.700q1 0 1.700 1l.6.900h5.400q1.400 0 1.400 1.400v6.500q0 1.200-1.200 1.200h-11.200q-1.200 0-1.200-1.200z" fill="#f4cf5a" stroke="#a08424" stroke-width="1"/><path d="M2 7.300h12.400v5.500q0 .7-.7.700h-11q-.7 0-.7-.7z" fill="#fbe68c"/><path d="M2.200 6.300h12" stroke="#fff4c0" stroke-width="1"/><path d="M2 13.300h12.300" stroke="#e9c24f" stroke-width="1"/></svg>
<span class="m" style="left:228px;top:319px;font-size:12px;color:#000;transform:scaleX(0.8333)">05C0132</span>
<svg class="a" style="left:210px;top:333px" width="17" height="16" viewBox="0 0 17 16"><path d="M1.500 14.300v-9.300q0-2 1.800-2h2.700q1 0 1.700 1l.6.900h5.500q1.400 0 1.400 1.400v8z" fill="#6f5d1c" opacity=".55" transform="translate(.6 .7)"/><path d="M1.300 5q0-2 1.800-2h2.700q1 0 1.700 1l.6.900h5.400q1.400 0 1.400 1.400v6.500q0 1.200-1.200 1.200h-11.200q-1.200 0-1.200-1.200z" fill="#f4cf5a" stroke="#a08424" stroke-width="1"/><path d="M2 7.300h12.400v5.500q0 .7-.7.700h-11q-.7 0-.7-.7z" fill="#fbe68c"/><path d="M2.200 6.300h12" stroke="#fff4c0" stroke-width="1"/><path d="M2 13.300h12.300" stroke="#e9c24f" stroke-width="1"/></svg>
<span class="m" style="left:228px;top:336px;font-size:12px;color:#000;transform:scaleX(0.8333)">05C0133</span>
<svg class="a" style="left:210px;top:350px" width="17" height="16" viewBox="0 0 17 16"><path d="M1.500 14.300v-9.300q0-2 1.800-2h2.700q1 0 1.700 1l.6.900h5.500q1.400 0 1.400 1.400v8z" fill="#6f5d1c" opacity=".55" transform="translate(.6 .7)"/><path d="M1.300 5q0-2 1.800-2h2.700q1 0 1.700 1l.6.900h5.400q1.400 0 1.400 1.400v6.500q0 1.200-1.200 1.200h-11.200q-1.200 0-1.200-1.200z" fill="#f4cf5a" stroke="#a08424" stroke-width="1"/><path d="M2 7.300h12.400v5.500q0 .7-.7.700h-11q-.7 0-.7-.7z" fill="#fbe68c"/><path d="M2.200 6.300h12" stroke="#fff4c0" stroke-width="1"/><path d="M2 13.300h12.300" stroke="#e9c24f" stroke-width="1"/></svg>
<span class="m" style="left:228px;top:353px;font-size:12px;color:#000;transform:scaleX(0.8333)">05C0134</span>
<svg class="a" style="left:210px;top:367px" width="17" height="16" viewBox="0 0 17 16"><path d="M1.500 14.300v-9.300q0-2 1.800-2h2.700q1 0 1.700 1l.6.900h5.500q1.400 0 1.400 1.400v8z" fill="#6f5d1c" opacity=".55" transform="translate(.6 .7)"/><path d="M1.300 5q0-2 1.800-2h2.700q1 0 1.700 1l.6.900h5.400q1.400 0 1.400 1.400v6.500q0 1.200-1.200 1.200h-11.200q-1.200 0-1.200-1.200z" fill="#f4cf5a" stroke="#a08424" stroke-width="1"/><path d="M2 7.300h12.400v5.500q0 .7-.7.700h-11q-.7 0-.7-.7z" fill="#fbe68c"/><path d="M2.200 6.300h12" stroke="#fff4c0" stroke-width="1"/><path d="M2 13.300h12.300" stroke="#e9c24f" stroke-width="1"/></svg>
<span class="m" style="left:228px;top:370px;font-size:12px;color:#000;transform:scaleX(0.8333)">05C0142</span>
<svg class="a" style="left:210px;top:384px" width="17" height="16" viewBox="0 0 17 16"><path d="M1.500 14.300v-9.300q0-2 1.800-2h2.700q1 0 1.700 1l.6.900h5.500q1.400 0 1.400 1.400v8z" fill="#6f5d1c" opacity=".55" transform="translate(.6 .7)"/><path d="M1.300 5q0-2 1.800-2h2.700q1 0 1.700 1l.6.900h5.400q1.400 0 1.400 1.400v6.500q0 1.200-1.200 1.200h-11.200q-1.200 0-1.200-1.200z" fill="#f4cf5a" stroke="#a08424" stroke-width="1"/><path d="M2 7.300h12.400v5.500q0 .7-.7.700h-11q-.7 0-.7-.7z" fill="#fbe68c"/><path d="M2.200 6.300h12" stroke="#fff4c0" stroke-width="1"/><path d="M2 13.300h12.300" stroke="#e9c24f" stroke-width="1"/></svg>
<span class="m" style="left:228px;top:387px;font-size:12px;color:#000;transform:scaleX(0.8333)">05C0143</span>
<svg class="a" style="left:210px;top:401px" width="17" height="16" viewBox="0 0 17 16"><path d="M1.500 14.300v-9.300q0-2 1.800-2h2.700q1 0 1.700 1l.6.900h5.500q1.400 0 1.400 1.400v8z" fill="#6f5d1c" opacity=".55" transform="translate(.6 .7)"/><path d="M1.300 5q0-2 1.800-2h2.700q1 0 1.700 1l.6.900h5.400q1.400 0 1.400 1.400v6.500q0 1.200-1.200 1.200h-11.200q-1.200 0-1.200-1.200z" fill="#f4cf5a" stroke="#a08424" stroke-width="1"/><path d="M2 7.300h12.400v5.500q0 .7-.7.700h-11q-.7 0-.7-.7z" fill="#fbe68c"/><path d="M2.200 6.300h12" stroke="#fff4c0" stroke-width="1"/><path d="M2 13.300h12.300" stroke="#e9c24f" stroke-width="1"/></svg>
<span class="m" style="left:228px;top:404px;font-size:12px;color:#000;transform:scaleX(0.8333)">05C0144</span>
<svg class="a" style="left:210px;top:418px" width="17" height="16" viewBox="0 0 17 16"><path d="M1.500 14.300v-9.300q0-2 1.800-2h2.700q1 0 1.700 1l.6.900h5.500q1.400 0 1.400 1.400v8z" fill="#6f5d1c" opacity=".55" transform="translate(.6 .7)"/><path d="M1.300 5q0-2 1.800-2h2.700q1 0 1.700 1l.6.900h5.400q1.400 0 1.400 1.400v6.500q0 1.200-1.200 1.200h-11.200q-1.200 0-1.200-1.200z" fill="#f4cf5a" stroke="#a08424" stroke-width="1"/><path d="M2 7.300h12.400v5.500q0 .7-.7.700h-11q-.7 0-.7-.7z" fill="#fbe68c"/><path d="M2.200 6.300h12" stroke="#fff4c0" stroke-width="1"/><path d="M2 13.300h12.300" stroke="#e9c24f" stroke-width="1"/></svg>
<span class="m" style="left:228px;top:421px;font-size:12px;color:#000;transform:scaleX(0.8333)">06C0123</span>
<svg class="a" style="left:210px;top:435px" width="17" height="16" viewBox="0 0 17 16"><path d="M1.500 14.300v-9.300q0-2 1.800-2h2.700q1 0 1.700 1l.6.900h5.500q1.400 0 1.400 1.400v8z" fill="#6f5d1c" opacity=".55" transform="translate(.6 .7)"/><path d="M1.300 5q0-2 1.800-2h2.700q1 0 1.700 1l.6.900h5.400q1.400 0 1.400 1.400v6.500q0 1.200-1.200 1.200h-11.200q-1.200 0-1.200-1.200z" fill="#f4cf5a" stroke="#a08424" stroke-width="1"/><path d="M2 7.300h12.400v5.500q0 .7-.7.700h-11q-.7 0-.7-.7z" fill="#fbe68c"/><path d="M2.200 6.300h12" stroke="#fff4c0" stroke-width="1"/><path d="M2 13.300h12.300" stroke="#e9c24f" stroke-width="1"/></svg>
<span class="m" style="left:228px;top:438px;font-size:12px;color:#000;transform:scaleX(0.8333)">06C0124</span>
<svg class="a" style="left:210px;top:452px" width="17" height="16" viewBox="0 0 17 16"><path d="M1.500 14.300v-9.300q0-2 1.800-2h2.700q1 0 1.700 1l.6.900h5.500q1.400 0 1.400 1.400v8z" fill="#6f5d1c" opacity=".55" transform="translate(.6 .7)"/><path d="M1.300 5q0-2 1.800-2h2.700q1 0 1.700 1l.6.900h5.400q1.400 0 1.400 1.400v6.500q0 1.200-1.200 1.200h-11.200q-1.200 0-1.200-1.200z" fill="#f4cf5a" stroke="#a08424" stroke-width="1"/><path d="M2 7.300h12.400v5.500q0 .7-.7.700h-11q-.7 0-.7-.7z" fill="#fbe68c"/><path d="M2.200 6.300h12" stroke="#fff4c0" stroke-width="1"/><path d="M2 13.300h12.300" stroke="#e9c24f" stroke-width="1"/></svg>
<span class="m" style="left:228px;top:455px;font-size:12px;color:#000;transform:scaleX(0.8333)">06C0133</span>
<svg class="a" style="left:210px;top:469px" width="17" height="16" viewBox="0 0 17 16"><path d="M1.500 14.300v-9.300q0-2 1.800-2h2.700q1 0 1.700 1l.6.900h5.500q1.400 0 1.400 1.400v8z" fill="#6f5d1c" opacity=".55" transform="translate(.6 .7)"/><path d="M1.300 5q0-2 1.800-2h2.700q1 0 1.700 1l.6.900h5.400q1.400 0 1.400 1.400v6.500q0 1.200-1.200 1.200h-11.200q-1.200 0-1.200-1.200z" fill="#f4cf5a" stroke="#a08424" stroke-width="1"/><path d="M2 7.300h12.400v5.500q0 .7-.7.700h-11q-.7 0-.7-.7z" fill="#fbe68c"/><path d="M2.200 6.300h12" stroke="#fff4c0" stroke-width="1"/><path d="M2 13.300h12.300" stroke="#e9c24f" stroke-width="1"/></svg>
<span class="m" style="left:228px;top:472px;font-size:12px;color:#000;transform:scaleX(0.8333)">06C0134</span>
<svg class="a" style="left:210px;top:486px" width="17" height="16" viewBox="0 0 17 16"><path d="M1.500 14.300v-9.300q0-2 1.800-2h2.700q1 0 1.700 1l.6.900h5.500q1.400 0 1.400 1.400v8z" fill="#6f5d1c" opacity=".55" transform="translate(.6 .7)"/><path d="M1.300 5q0-2 1.800-2h2.700q1 0 1.700 1l.6.900h5.400q1.400 0 1.400 1.400v6.500q0 1.200-1.200 1.200h-11.200q-1.200 0-1.200-1.200z" fill="#f4cf5a" stroke="#a08424" stroke-width="1"/><path d="M2 7.300h12.400v5.500q0 .7-.7.700h-11q-.7 0-.7-.7z" fill="#fbe68c"/><path d="M2.200 6.300h12" stroke="#fff4c0" stroke-width="1"/><path d="M2 13.300h12.300" stroke="#e9c24f" stroke-width="1"/></svg>
<span class="m" style="left:228px;top:489px;font-size:12px;color:#000;transform:scaleX(0.8333)">06C0143</span>
<svg class="a" style="left:210px;top:503px" width="17" height="16" viewBox="0 0 17 16"><path d="M1.500 14.300v-9.300q0-2 1.800-2h2.700q1 0 1.700 1l.6.900h5.500q1.400 0 1.400 1.400v8z" fill="#6f5d1c" opacity=".55" transform="translate(.6 .7)"/><path d="M1.300 5q0-2 1.800-2h2.700q1 0 1.700 1l.6.900h5.400q1.400 0 1.400 1.400v6.500q0 1.200-1.200 1.200h-11.200q-1.200 0-1.200-1.200z" fill="#f4cf5a" stroke="#a08424" stroke-width="1"/><path d="M2 7.300h12.400v5.500q0 .7-.7.700h-11q-.7 0-.7-.7z" fill="#fbe68c"/><path d="M2.200 6.300h12" stroke="#fff4c0" stroke-width="1"/><path d="M2 13.300h12.300" stroke="#e9c24f" stroke-width="1"/></svg>
<span class="m" style="left:228px;top:506px;font-size:12px;color:#000;transform:scaleX(0.8333)">06C0144</span>
<div class="a" style="left:342px;top:127px;width:671px;height:634px;background:#0a43d8;border-radius:8px 8px 0 0;box-shadow:inset 1px 0 0 #0831d9,inset -1px 0 0 #001ea0,inset 0 -1px 0 #001ea0,inset 2px 0 0 #166aee,inset -2px 0 0 #0441d8"></div>
<div class="a" style="left:342px;top:127px;width:671px;height:30px;border-radius:8px 8px 0 0;background:linear-gradient(to bottom,#0058ee 0%,#3593ff 4%,#288eff 6%,#127dff 8%,#036ffc 10%,#0262ee 14%,#0057e5 20%,#0054e3 24%,#0055eb 56%,#005bf5 66%,#026afe 76%,#0062ef 86%,#0052d6 92%,#0040ab 94%,#003092 100%)"></div>
<div class="a" style="left:342px;top:157px;width:671px;height:604px;background:linear-gradient(to right,#0019cf 0,#0831d9 1px,#166aee 2px,#0855dd 3px,#0048e0 4px,transparent 4px,transparent 667px,#0048e0 667px,#0441d8 669px,#001ea0 671px)"></div>
<div class="a" style="left:342px;top:757px;width:671px;height:4px;background:linear-gradient(to bottom,#0048e0,#0831d9 50%,#001ea0)"></div>
<svg class="a" style="left:348px;top:135px" width="16" height="16" viewBox="0 0 16 16"><rect x="6.500" y="-.3" width="3" height="3.300" fill="#a4473a" transform="rotate(0 8 8)"/><rect x="6.500" y="-.3" width="3" height="3.300" fill="#a4473a" transform="rotate(45 8 8)"/><rect x="6.500" y="-.3" width="3" height="3.300" fill="#a4473a" transform="rotate(90 8 8)"/><rect x="6.500" y="-.3" width="3" height="3.300" fill="#a4473a" transform="rotate(135 8 8)"/><rect x="6.500" y="-.3" width="3" height="3.300" fill="#a4473a" transform="rotate(180 8 8)"/><rect x="6.500" y="-.3" width="3" height="3.300" fill="#a4473a" transform="rotate(225 8 8)"/><rect x="6.500" y="-.3" width="3" height="3.300" fill="#a4473a" transform="rotate(270 8 8)"/><rect x="6.500" y="-.3" width="3" height="3.300" fill="#a4473a" transform="rotate(315 8 8)"/><circle cx="8" cy="8" r="6.200" fill="#a4473a"/><circle cx="8" cy="8" r="4.300" fill="#e6dcd8"/><circle cx="8" cy="8" r="3" fill="#25428c"/><path d="M8 5.500l.8 1.800 1.800.7-1.800.7-.8 1.800-.8-1.800-1.800-.7 1.800-.7z" fill="#fff"/></svg>
<svg class="a" style="left:368px;top:136.5px" width="72" height="16" overflow="visible" aria-label="机械工程师"><text class="t" x="0" y="11.5" font-size="13" font-weight="bold" letter-spacing="1" fill="#fff">机械工程师</text></svg><span class="m" style="left:438px;top:136px;font-size:14px;color:#fff;transform:scaleX(0.9524);font-weight:bold">CAD2014 - [C:\Documents and Settings\Administrator\</span><svg class="a" style="left:846px;top:136.5px" width="30" height="16" overflow="visible" aria-label="桌面"><text class="t" x="0" y="11.5" font-size="13" font-weight="bold" letter-spacing="1" fill="#fff">桌面</text></svg><span class="m" style="left:874px;top:136px;font-size:14px;color:#fff;transform:scaleX(0.9524);font-weight:bold">\DTI...</span>
<div class="a" style="left:940px;top:133px;width:21px;height:21px;border-radius:3px;border:1px solid #fff;background:linear-gradient(135deg,#6f9df5 0%,#2c62dd 45%,#1f4fc8 100%)"><svg width="21" height="21" style="position:absolute;left:-1px;top:-1px"><rect x="5.04" y="13.86" width="7.56" height="3" fill="#fff"/></svg></div>
<div class="a" style="left:963px;top:133px;width:21px;height:21px;border-radius:3px;border:1px solid #fff;background:linear-gradient(135deg,#6f9df5 0%,#2c62dd 45%,#1f4fc8 100%)"><svg width="21" height="21" style="position:absolute;left:-1px;top:-1px"><rect x="5.25" y="5.25" width="10.5" height="10.5" fill="none" stroke="#fff" stroke-width="1.4"/><rect x="5.25" y="4.62" width="10.5" height="2.2" fill="#fff"/></svg></div>
<div class="a" style="left:986px;top:133px;width:21px;height:21px;border-radius:3px;border:1px solid #fff;background:linear-gradient(135deg,#e9957a 0%,#d4512f 45%,#c13a1c 100%)"><svg width="21" height="21" style="position:absolute;left:-1px;top:-1px"><path d="M5.88 5.88L15.12 15.12M15.12 5.88L5.88 15.12" stroke="#fff" stroke-width="2.2" stroke-linecap="round"/></svg></div>
<div class="a" style="left:346px;top:157px;width:663px;height:600px;background:#ece9d8"></div>
<svg class="a" style="left:351px;top:158px" width="15" height="18" viewBox="0 0 15 18"><path d="M.5 1h9l5 5v11h-14z" fill="#f2c91e"/><path d="M.5 1h9l5 5v5l-14-5z" fill="#2f5e8f"/><path d="M.5 1h9l3 3-8 4-4-2z" fill="#27457a"/><path d="M3 9l11-1v3l-13.500 3v-3z" fill="#3f7a9f" opacity=".8"/><path d="M3.500 1.500l.7 2 2 .8-2 .8-.7 2-.7-2-2-.8 2-.8z" fill="#fff"/><path d="M.5 13l14-3v7h-14z" fill="#f6d11c"/></svg>
<span class="m" style="left:372px;top:162px;font-size:12px;color:#000;transform:scaleX(0.8333)">AutoCAD2008</span><svg class="a" style="left:438px;top:161px" width="26" height="15" overflow="visible" aria-label="菜单"><text class="t" x="0" y="10.5" font-size="12" fill="#000">菜单</text></svg><span class="m" style="left:462px;top:162px;font-size:12px;color:#000;transform:scaleX(0.8333)">(<u>A</u>)</span>
<svg class="a" style="left:492px;top:161px" width="26" height="15" overflow="visible" aria-label="绘图"><text class="t" x="0" y="10.5" font-size="12" fill="#000">绘图</text></svg><span class="m" style="left:516px;top:162px;font-size:12px;color:#000;transform:scaleX(0.8333)">(<u>D</u>)</span>
<svg class="a" style="left:546px;top:161px" width="26" height="15" overflow="visible" aria-label="工具"><text class="t" x="0" y="10.5" font-size="12" fill="#000">工具</text></svg><span class="m" style="left:570px;top:162px;font-size:12px;color:#000;transform:scaleX(0.8333)">(<u>T</u>)</span>
<svg class="a" style="left:600px;top:161px" width="38" height="15" overflow="visible" aria-label="标准件"><text class="t" x="0" y="10.5" font-size="12" fill="#000">标准件</text></svg><span class="m" style="left:636px;top:162px;font-size:12px;color:#000;transform:scaleX(0.8333)">(<u>S</u>)</span>
<svg class="a" style="left:666px;top:161px" width="38" height="15" overflow="visible" aria-label="非标件"><text class="t" x="0" y="10.5" font-size="12" fill="#000">非标件</text></svg><span class="m" style="left:702px;top:162px;font-size:12px;color:#000;transform:scaleX(0.8333)">(<u>F</u>)</span>
<svg class="a" style="left:732px;top:161px" width="38" height="15" overflow="visible" aria-label="常用件"><text class="t" x="0" y="10.5" font-size="12" fill="#000">常用件</text></svg><span class="m" style="left:768px;top:162px;font-size:12px;color:#000;transform:scaleX(0.8333)">(<u>C</u>)</span>
<svg class="a" style="left:798px;top:161px" width="26" height="15" overflow="visible" aria-label="标注"><text class="t" x="0" y="10.5" font-size="12" fill="#000">标注</text></svg><span class="m" style="left:822px;top:162px;font-size:12px;color:#000;transform:scaleX(0.8333)">(<u>L</u>)</span>
<svg class="a" style="left:852px;top:161px" width="26" height="15" overflow="visible" aria-label="尺寸"><text class="t" x="0" y="10.5" font-size="12" fill="#000">尺寸</text></svg><span class="m" style="left:876px;top:162px;font-size:12px;color:#000;transform:scaleX(0.8333)">(<u>M</u>)</span>
<svg class="a" style="left:906px;top:161px" width="26" height="15" overflow="visible" aria-label="序号"><text class="t" x="0" y="10.5" font-size="12" fill="#000">序号</text></svg><span class="m" style="left:930px;top:162px;font-size:12px;color:#000;transform:scaleX(0.8333)">(<u>N</u>)</span>
<svg class="a" style="left:352px;top:180px" width="50" height="15" overflow="visible" aria-label="尺寸驱动"><text class="t" x="0" y="10.5" font-size="12" fill="#000">尺寸驱动</text></svg><span class="m" style="left:400px;top:181px;font-size:12px;color:#000;transform:scaleX(0.8333)">(<u>P</u>)</span>
<svg class="a" style="left:430px;top:180px" width="26" height="15" overflow="visible" aria-label="其它"><text class="t" x="0" y="10.5" font-size="12" fill="#000">其它</text></svg><span class="m" style="left:454px;top:181px;font-size:12px;color:#000;transform:scaleX(0.8333)">(<u>O</u>)</span>
<svg class="a" style="left:484px;top:180px" width="26" height="15" overflow="visible" aria-label="窗口"><text class="t" x="0" y="10.5" font-size="12" fill="#000">窗口</text></svg><span class="m" style="left:508px;top:181px;font-size:12px;color:#000;transform:scaleX(0.8333)">(<u>W</u>)</span>
<span class="m" style="left:538px;top:181px;font-size:12px;color:#000;transform:scaleX(0.8333)">_</span><svg class="a" style="left:544px;top:180px" width="14" height="15" overflow="visible" aria-label="钢"><text class="t" x="0" y="10.5" font-size="12" fill="#000">钢</text></svg><span class="m" style="left:556px;top:181px;font-size:12px;color:#000;transform:scaleX(0.8333)">_</span>
<span class="m" style="left:574px;top:181px;font-size:12px;color:#000;transform:scaleX(0.8333)">_</span><svg class="a" style="left:580px;top:180px" width="14" height="15" overflow="visible" aria-label="结"><text class="t" x="0" y="10.5" font-size="12" fill="#000">结</text></svg><span class="m" style="left:592px;top:181px;font-size:12px;color:#000;transform:scaleX(0.8333)">_</span>
<span class="m" style="left:610px;top:181px;font-size:12px;color:#000;transform:scaleX(0.8333)">_</span><svg class="a" style="left:616px;top:180px" width="14" height="15" overflow="visible" aria-label="构"><text class="t" x="0" y="10.5" font-size="12" fill="#000">构</text></svg><span class="m" style="left:628px;top:181px;font-size:12px;color:#000;transform:scaleX(0.8333)">_</span>
<svg class="a" style="left:957px;top:177px" width="16" height="16" viewBox="0 0 16 16"><rect x="0" y="0" width="16" height="16" fill="#f1efe4"/><path d="M4 11.500h6" stroke="#6d6a5c" stroke-width="2"/></svg>
<svg class="a" style="left:975px;top:177px" width="16" height="16" viewBox="0 0 16 16"><rect x="0" y="0" width="16" height="16" fill="#f1efe4"/><path d="M6 4.500h5.500v5h-1.500M3.500 7h5.500v5h-5.500z" fill="none" stroke="#6d6a5c" stroke-width="1.300"/><path d="M6 4.500h5.500M3.500 7h5.500" stroke="#6d6a5c" stroke-width="2"/></svg>
<svg class="a" style="left:993px;top:177px" width="16" height="16" viewBox="0 0 16 16"><rect x="0" y="0" width="16" height="16" fill="#f1efe4"/><path d="M4 4.500l7 7M11 4.500l-7 7" stroke="#55524a" stroke-width="2"/></svg>
<div class="a" style="left:346px;top:196px;width:663px;height:2px;border-top:1px solid #c5c2b2;border-bottom:1px solid #fff"></div>
<div class="a" style="left:346px;top:224px;width:663px;height:2px;border-top:1px solid #c5c2b2;border-bottom:1px solid #fff"></div>
<div class="a" style="left:346px;top:252px;width:663px;height:2px;border-top:1px solid #c5c2b2;border-bottom:1px solid #fff"></div>
<div class="a" style="left:346px;top:281px;width:663px;height:2px;border-top:1px solid #c5c2b2;border-bottom:1px solid #fff"></div>
<div class="a" style="left:346px;top:308px;width:663px;height:2px;border-top:1px solid #c5c2b2;border-bottom:1px solid #fff"></div>
<div class="a" style="left:350px;top:199px;width:2px;height:23px;border-left:1px solid #fff;border-right:1px solid #aca899"></div><div class="a" style="left:353px;top:199px;width:2px;height:23px;border-left:1px solid #fff;border-right:1px solid #aca899"></div>
<div class="a" style="left:350px;top:227px;width:2px;height:23px;border-left:1px solid #fff;border-right:1px solid #aca899"></div><div class="a" style="left:353px;top:227px;width:2px;height:23px;border-left:1px solid #fff;border-right:1px solid #aca899"></div>
<div class="a" style="left:350px;top:256px;width:2px;height:23px;border-left:1px solid #fff;border-right:1px solid #aca899"></div><div class="a" style="left:353px;top:256px;width:2px;height:23px;border-left:1px solid #fff;border-right:1px solid #aca899"></div>
<div class="a" style="left:350px;top:284px;width:2px;height:23px;border-left:1px solid #fff;border-right:1px solid #aca899"></div><div class="a" style="left:353px;top:284px;width:2px;height:23px;border-left:1px solid #fff;border-right:1px solid #aca899"></div>
<svg class="a" style="left:362px;top:203px" width="16" height="16" viewBox="0 0 16 16"><defs><linearGradient id="pg" x1="0" y1="0" x2="1" y2="1"><stop offset="0" stop-color="#fff"/><stop offset="1" stop-color="#b5cdf0"/></linearGradient></defs><path d="M1 2.500h10.500l3.500 3.500v8.500h-14z" fill="url(#pg)" stroke="#1f3f8f" stroke-width="1.100"/><path d="M11.500 2.500v3.500h3.500" fill="#e8f0fc" stroke="#1f3f8f" stroke-width=".9"/></svg><svg class="a" style="left:385px;top:203px" width="16" height="16" viewBox="0 0 16 16"><path d="M1.500 5l3-2.500h4l1 1.500h4.500v3h-12.500z" fill="#d8b64a" stroke="#8a6d20" stroke-width=".8"/><path d="M1 8l2-3 11-2.500 1 8.500-10.500 3.500z" fill="#f0d060" stroke="#8a6d20" stroke-width=".8"/><path d="M6 5.500l5.500 7.500-1.500.3 1.800 2.500-1.300.8-1.700-2.600-1.300 1.300z" fill="#20304a"/></svg><svg class="a" style="left:408px;top:203px" width="16" height="16" viewBox="0 0 16 16"><path d="M1.500 1.500h13v13h-11.500l-1.500-1.500z" fill="#3f74c8" stroke="#1f3f8f" stroke-width="1"/><rect x="4" y="2" width="8" height="5.500" fill="#cfe0f7"/><path d="M5 3.500h6M5 5.500h6" stroke="#7fa2d8" stroke-width=".8"/><rect x="4.500" y="10" width="7" height="4.500" fill="#e8eef8"/><rect x="6" y="10.800" width="2" height="3" fill="#2a4fa0"/></svg><div class="a" style="left:430px;top:200px;width:2px;height:22px;border-left:1px solid #c5c2b2;border-right:1px solid #fff"></div><svg class="a" style="left:438px;top:203px" width="16" height="16" viewBox="0 0 16 16"><path d="M4.500 1.500h6l1 5h-8z" fill="#fff" stroke="#6a7fa8" stroke-width=".8"/><path d="M1.500 7q0-1 1-1h11q1 0 1 1v4.500h-13z" fill="#c9d4e8" stroke="#4a5f8f" stroke-width=".9"/><path d="M3.500 10.500h9l1 4h-11z" fill="#fff" stroke="#6a7fa8" stroke-width=".8"/><circle cx="12.500" cy="8" r=".8" fill="#3fa03f"/></svg><svg class="a" style="left:461px;top:203px" width="16" height="16" viewBox="0 0 16 16"><path d="M1.500 1.500h9l3 3v10h-12z" fill="url(#pg)" stroke="#5a7fb8" stroke-width="1"/><circle cx="9" cy="8" r="3.800" fill="#e8f4ff" fill-opacity=".8" stroke="#4f6f9f" stroke-width="1.300"/><path d="M6.500 10.500l-4 4.500" stroke="#a87a3a" stroke-width="2"/></svg><svg class="a" style="left:484px;top:203px" width="16" height="16" viewBox="0 0 16 16"><circle cx="10.500" cy="6" r="5" fill="#3f7fd0"/><path d="M7 4q3-2 6 0t2 4" stroke="#7fd07f" stroke-width="1.500" fill="none"/><path d="M1 3.500l6.500-2.500 1.500 7-6.500 2.500z" fill="#f0c828" stroke="#7a6410" stroke-width=".7"/><path d="M3.500 4.500l2.500-1 .5 2.500-2.500 1z" fill="#7a6410"/><path d="M2 10.500h9l2 2.500-2 2.500h-9.500z" fill="#dfe6f4" stroke="#4a5f9f" stroke-width=".8"/></svg><svg class="a" style="left:507px;top:203px" width="16" height="16" viewBox="0 0 16 16"><path d="M1 8l6-3v8l-6 2.500z" fill="#e4ebf5" stroke="#b0bdd0" stroke-width=".6"/><circle cx="10" cy="6.500" r="5.500" fill="#4f8f9f"/><path d="M6 5q3-3.500 6-1.500t2.500 4.500q-3 1-5-1t-3.500-2z" fill="#5fb05f"/><path d="M5.500 9q3 3.500 7 1.500" stroke="#2f5f8f" stroke-width="1.500" fill="none"/><path d="M7 10l6 2v3.500l-6-2.500z" fill="#f2f5fa" opacity=".85"/></svg><div class="a" style="left:528px;top:200px;width:2px;height:22px;border-left:1px solid #c5c2b2;border-right:1px solid #fff"></div><svg class="a" style="left:535px;top:203px" width="16" height="16" viewBox="0 0 16 16"><path d="M1 5l11 4.500M1 8.500l11-3" stroke="#3a3a3a" stroke-width="1.300"/><circle cx="13" cy="5" r="2.200" fill="none" stroke="#2f4fa8" stroke-width="1.400"/><circle cx="13" cy="10.500" r="2.200" fill="none" stroke="#2f4fa8" stroke-width="1.400"/></svg><svg class="a" style="left:558px;top:203px" width="16" height="16" viewBox="0 0 16 16"><path d="M1 1.500h7.500l2.500 2.500v7h-10z" fill="url(#pg)" stroke="#1f3f8f" stroke-width="1"/><path d="M5 5.500h7.500l2.500 2.500v7h-10z" fill="url(#pg)" stroke="#1f3f8f" stroke-width="1"/></svg><svg class="a" style="left:581px;top:203px" width="16" height="16" viewBox="0 0 16 16"><path d="M2.500 3.500l8-2 4 9.500-8 3.500z" fill="#e8d9a0" stroke="#a08a3a" stroke-width="1.400" transform="rotate(8 8 8)"/><path d="M6 1l2-.8 1.500 1.500-3 1z" fill="#8a8a8a"/><path d="M5 4.500h6l2 2v6h-8z" fill="#eef4fc" stroke="#6a8ab8" stroke-width=".9"/></svg><svg class="a" style="left:605px;top:203px" width="16" height="16" viewBox="0 0 16 16"><path d="M14 1.500l1 1-6.500 8-2-1.500z" fill="#a8763a" stroke="#5a3a1a" stroke-width=".6"/><path d="M6.500 9l2 1.500-3.500 4-4 .5q3-1.500 5.500-6z" fill="#2a2a2a"/></svg><svg class="a" style="left:627px;top:203px" width="16" height="16" viewBox="0 0 16 16"><path d="M9 1h5l-2.500 4h3l-6.500 6 2-4.500h-3z" fill="#f5d020" stroke="#a8861a" stroke-width=".6"/><rect x="2" y="7.500" width="7.500" height="7" fill="#f0946a" stroke="#2a3f8f" stroke-width="1"/><rect x=".5" y="12.500" width="3" height="3" fill="#1f4fc0"/></svg><div class="a" style="left:649px;top:200px;width:2px;height:22px;border-left:1px solid #c5c2b2;border-right:1px solid #fff"></div><svg class="a" style="left:657px;top:203px" width="16" height="16" viewBox="0 0 16 16"><path d="M13.500 3q-7-2.500-9 5.500l-3-1 3.500 7.500 5-6-2.800.3q1-5.500 6.300-6.300z" fill="#1f3a8f" stroke="#16295f" stroke-width=".6"/></svg><svg class="a" style="left:680px;top:208px" width="7" height="5" viewBox="0 0 7 5"><path d="M.5 .5h6l-3 3.500z" fill="#000"/></svg><svg class="a" style="left:693px;top:203px" width="16" height="16" viewBox="0 0 16 16"><path d="M2 3q7-2.500 9 5.500l3-1-3.500 7.500-5-6 2.800.3q-1-5.500-6.300-6.300z" fill="#c9c6b8" stroke="#b5b2a4" stroke-width=".6"/></svg><svg class="a" style="left:714px;top:208px" width="7" height="5" viewBox="0 0 7 5"><path d="M1 1h5l-2.500 3z" fill="#b8b5a5"/></svg><div class="a" style="left:727px;top:200px;width:2px;height:22px;border-left:1px solid #c5c2b2;border-right:1px solid #fff"></div><svg class="a" style="left:734px;top:203px" width="16" height="16" viewBox="0 0 16 16"><path d="M2 5.500l2-1.500 2 3 .5-4.500 1.800-.3.700 4 1.500-3 1.500.8-1.500 5.500v3.500l-5 1z" fill="#e8a89a" stroke="#8a4a3f" stroke-width=".8"/><path d="M7 12.500l4.500-1.500 2.500 2v3h-7z" fill="#2f4a8f"/><path d="M13 1v6M10 4h6M13 1l-1 1.200h2zM13 7l-1-1.200h2zM10 4l1.200-1v2zM16 4l-1.200-1v2z" stroke="#2f3f7f" stroke-width=".9" fill="#2f3f7f"/></svg><svg class="a" style="left:757px;top:203px" width="16" height="16" viewBox="0 0 16 16"><circle cx="6" cy="6" r="4.800" fill="#e4f2ff" stroke="#6a7f9f" stroke-width="1.400"/><path d="M9.500 9.500l5 5.500" stroke="#a87a3a" stroke-width="2.200"/><path d="M11 3h4M13 1v4M11 7h4" stroke="#000" stroke-width="1"/></svg><svg class="a" style="left:780px;top:203px" width="16" height="16" viewBox="0 0 16 16"><circle cx="7" cy="7" r="5.800" fill="#dbe9fb" stroke="#54688f" stroke-width="1.400"/><path d="M7 2.500v9M2.500 7h9M7 2l-1.300 1.600h2.600zM7 12l-1.300-1.600h2.600zM2 7l1.600-1.300v2.600zM12 7l-1.600-1.300v2.600z" stroke="#1f2f6f" stroke-width="1" fill="#1f2f6f"/><path d="M11 11l2 2" stroke="#a87a3a" stroke-width="2"/><path d="M16 11.500v4.500h-4.500z" fill="#000"/></svg><svg class="a" style="left:803px;top:203px" width="16" height="16" viewBox="0 0 16 16"><circle cx="6.500" cy="6" r="5" fill="#dbe9fb" stroke="#6a7f9f" stroke-width="1.400"/><path d="M10 9.500l4.500 5.500" stroke="#a87a3a" stroke-width="2.200"/><path d="M4 8v-4h4M3.500 4.500l6-2.500q2.500 1 2 4" stroke="#1f3a8f" stroke-width="1.800" fill="none"/></svg><div class="a" style="left:825px;top:200px;width:2px;height:22px;border-left:1px solid #c5c2b2;border-right:1px solid #fff"></div><svg class="a" style="left:832px;top:203px" width="16" height="16" viewBox="0 0 16 16"><rect x="0.5" y="1" width="3.200" height="3.500" fill="#e02020"/><rect x="3.6" y="1" width="3.200" height="3.500" fill="#e0c020"/><rect x="6.700" y="1" width="3.200" height="3.500" fill="#20a020"/><rect x="9.800" y="1" width="3.200" height="3.500" fill="#2040e0"/><rect x="12.900" y="1" width="3.200" height="3.500" fill="#c020c0"/><path d="M3 8.500q4-3.500 9-2l2 1.500-3 1-5 2.500z" fill="#e8b09a" stroke="#7a4a3a" stroke-width=".7"/><path d="M11 6h4v4l-3 1z" fill="#2f4a9f"/><path d="M2 10.500q2-1 4 0M2 12.500q2-1 4 0M2 14.500q2-1 4 0" stroke="#3a3a3a" stroke-width="1" fill="none"/><path d="M9 15.500l2.500-6.500 2.500 6.500M10 13.500h3" stroke="#000" stroke-width="1.200" fill="none"/></svg><svg class="a" style="left:855px;top:203px" width="16" height="16" viewBox="0 0 16 16"><rect x=".7" y=".7" width="14.600" height="14.600" fill="#e8f0fc" stroke="#1f3a8f" stroke-width="1.300"/><path d="M4.500 1v14" stroke="#1f3a8f" stroke-width="1"/><path d="M2 3h1.500M2 5.500h1.500M2 8h1.500M2 10.500h1.500" stroke="#1f3a8f" stroke-width="1"/><rect x="6.500" y="2.500" width="3" height="3" fill="#fff" stroke="#1f3a8f" stroke-width=".9"/><rect x="11" y="2.500" width="3" height="3" fill="#fff" stroke="#1f3a8f" stroke-width=".9"/><rect x="6.500" y="6.800" width="3" height="3" fill="#fff" stroke="#1f3a8f" stroke-width=".9"/><rect x="11" y="6.800" width="3" height="3" fill="#fff" stroke="#1f3a8f" stroke-width=".9"/><rect x="6.500" y="11.100" width="3" height="3" fill="#fff" stroke="#1f3a8f" stroke-width=".9"/><rect x="11" y="11.100" width="3" height="3" fill="#fff" stroke="#1f3a8f" stroke-width=".9"/></svg><svg class="a" style="left:878px;top:203px" width="16" height="16" viewBox="0 0 16 16"><path d="M.7 1h8.500v14h-8.500z" fill="#e8f0fc" stroke="#1f3a8f" stroke-width="1.300"/><rect x="2.500" y="3" width="2.500" height="2.500" fill="#fff" stroke="#1f3a8f" stroke-width=".8"/><rect x="2.500" y="7" width="2.500" height="2.500" fill="#fff" stroke="#1f3a8f" stroke-width=".8"/><rect x="2.500" y="11" width="2.500" height="2.500" fill="#fff" stroke="#1f3a8f" stroke-width=".8"/><path d="M7 3.500q6-1.500 7 5" stroke="#222" stroke-width="1.300" fill="none"/><path d="M12 8l2.200 2.500 1.500-3z" fill="#222"/><rect x="11.500" y="11.500" width="3.500" height="3.500" fill="#fff" stroke="#222" stroke-width="1"/></svg><svg class="a" style="left:901px;top:203px" width="16" height="16" viewBox="0 0 16 16"><path d="M0 5l10-3.500 6 1v9l-10 3.500-6-1z" fill="#aab4c0"/><path d="M0 5l10-3.500v9l-10 3.500z" fill="#c8d0da"/><path d="M1 8q4-3 8-2t6 1.500" stroke="#7a8694" stroke-width="1.600" fill="none"/><path d="M2 12q5-3 13-1" stroke="#8e9aa8" stroke-width="1.300" fill="none"/></svg><svg class="a" style="left:924px;top:203px" width="16" height="16" viewBox="0 0 16 16"><path d="M4 3.500h10.500v11h-10.500z" fill="#f4f4f0" stroke="#9a9a90" stroke-width=".7"/><path d="M3 2.500h10.500v11h-10.500z" fill="#fafaf6" stroke="#9a9a90" stroke-width=".7"/><path d="M3 7q-2.500-1-1.500-3t3-1q.5-2.500 3-2t2.500 2.500q2.500 0 2 2.500t-2.500 2q0 2.500-2.500 2.500t-2.500-1.500q-2 .5-1.500-2z" fill="none" stroke="#d8203a" stroke-width="1.500"/></svg><svg class="a" style="left:947px;top:203px" width="16" height="16" viewBox="0 0 16 16"><rect x="2.500" y=".5" width="11" height="15" rx="1" fill="#1a1a1a"/><rect x="4" y="2" width="8" height="3" fill="#7fa08a"/><rect x="4" y="6.500" width="1.800" height="1.800" fill="#fff"/><rect x="7" y="6.500" width="1.800" height="1.800" fill="#fff"/><rect x="10" y="6.500" width="1.800" height="1.800" fill="#fff"/><rect x="4" y="9.500" width="1.800" height="1.800" fill="#fff"/><rect x="7" y="9.500" width="1.800" height="1.800" fill="#fff"/><rect x="10" y="9.500" width="1.800" height="1.800" fill="#fff"/><rect x="4" y="12.500" width="1.800" height="1.800" fill="#fff"/><rect x="7" y="12.500" width="1.800" height="1.800" fill="#fff"/><rect x="10" y="12.500" width="1.800" height="1.800" fill="#fff"/></svg><div class="a" style="left:969px;top:200px;width:2px;height:22px;border-left:1px solid #c5c2b2;border-right:1px solid #fff"></div><svg class="a" style="left:976px;top:203px" width="16" height="16" viewBox="0 0 16 16"><defs><linearGradient id="hq" x1="0" y1="0" x2="1" y2="1"><stop offset="0" stop-color="#5f8fd8"/><stop offset="1" stop-color="#1f3f8f"/></linearGradient></defs><rect x=".5" y="1" width="15" height="14" rx="3" fill="url(#hq)" stroke="#1f3a7f" stroke-width=".8"/><path d="M5 6q0-3 3-3t3 2.500q0 1.500-1.500 2.300t-1.300 2.200" fill="none" stroke="#fff" stroke-width="2.200"/><rect x="7" y="11.300" width="2.300" height="2.200" fill="#fff"/></svg><div class="a" style="left:999px;top:199px;width:2px;height:24px;border-left:1px solid #aca899;border-right:1px solid #fff"></div><svg class="a" style="left:361px;top:231px" width="17" height="17" viewBox="0 0 17 17"><path d="M1 5.500l7-3.500 7 3.500-7 3.500z" fill="#e8eef8" stroke="#7a8aa8" stroke-width=".8"/><path d="M1 8.500l7 3.500 7-3.500M1 11.500l7 3.500 7-3.500" fill="none" stroke="#7a8aa8" stroke-width="1.600"/><path d="M1 8.500l7-3 7 3-7 3.500z" fill="#d4deee" opacity=".8"/></svg><div class="a" style="left:382px;top:229px;width:300px;height:21px;background:#fff;border:1px solid #7f9db9"></div><svg class="a" style="left:387px;top:231px" width="16" height="16" viewBox="0 0 16 16"><path d="M4 6q0-4.500 4-4.500t4 4.500q0 2-1.500 3.500v2h-5v-2q-1.500-1.500-1.500-3.500z" fill="#fdf7b0" stroke="#5a5a5a" stroke-width="1"/><path d="M5.800 12.500h4.400v2.500h-4.400z" fill="#8a8a8a"/></svg><svg class="a" style="left:399px;top:231px" width="16" height="16" viewBox="0 0 16 16"><circle cx="8" cy="8" r="6" fill="#f2e03a" stroke="#8a7a1a" stroke-width="1"/><path d="M12.500 3.500l2-2M3.500 12.500l-2 2" stroke="#8a7a1a" stroke-width="1"/></svg><svg class="a" style="left:414px;top:230px" width="17" height="17" viewBox="0 0 17 17"><circle cx="7" cy="7" r="5.500" fill="#c8ccd2" stroke="#7a7f88" stroke-width="1"/><circle cx="7" cy="7" r="2.500" fill="none" stroke="#8a8f98" stroke-width="1"/><path d="M7 1.500v11M1.500 7h11M3 3l8 8M11 3l-8 8" stroke="#9a9fa8" stroke-width=".7"/><rect x="8.500" y="8.500" width="7" height="7" fill="#fff" stroke="#5a5a5a" stroke-width=".9"/></svg><svg class="a" style="left:435px;top:230px" width="16" height="16" viewBox="0 0 16 16"><path d="M2.500 8v-3q0-3.500 3.500-3.500t3.500 3" fill="none" stroke="#a89020" stroke-width="1.800"/><rect x="4.500" y="7.500" width="9" height="8" rx="1" fill="#e8d030" stroke="#7a6a10" stroke-width="1"/><path d="M6 10h6M6 12.500h6" stroke="#a89020" stroke-width=".9"/></svg><div class="a" style="left:451px;top:234px;width:11px;height:11px;background:#ffff00;border:1px solid #000"></div><span class="m" style="left:467px;top:235px;font-size:12px;color:#000;transform:scaleX(0.8333)">LK</span><svg class="a" style="left:665px;top:231px" width="16" height="17" viewBox="0 0 16 17" style="left:665px;top:231px;background:linear-gradient(#d9e4fd,#b4c9f7);border-radius:2px"><rect x=".5" y=".5" width="15" height="16" rx="2" fill="#c6d6fb" stroke="#b0c4f2"/><path d="M4.48 6.46l3.52 4.08l3.52 -4.08" fill="none" stroke="#4d6185" stroke-width="2"/></svg><svg class="a" style="left:685px;top:230px" width="17" height="18" viewBox="0 0 17 18"><path d="M1 4l7-3 7 3-7 3z" fill="#dfe8f4" stroke="#7a8aa8" stroke-width=".7"/><path d="M1 7l7 3 7-3" fill="none" stroke="#8a9ab8" stroke-width="1.500"/><path d="M4 10.500l6 2.500 6-3v3l-6 3-6-2.500z" fill="#f0d828" stroke="#8a7a10" stroke-width=".6"/><path d="M.5 16.500l4-4M4.500 12.500v2.500M4.500 12.500h-2.500" stroke="#222" stroke-width="1" fill="none"/></svg><svg class="a" style="left:708px;top:230px" width="17" height="18" viewBox="0 0 17 18"><path d="M1 6l7-3 7 3-7 3z" fill="#dfe8f4" stroke="#7a8aa8" stroke-width=".7"/><path d="M1 9l7 3 7-3M1 12l7 3 7-3" fill="none" stroke="#8a9ab8" stroke-width="1.500"/><path d="M5 7q0-5 5.500-5.500" stroke="#2f4fa8" stroke-width="2" fill="none"/><path d="M3 6l2.200 3.500 2.500-3.500z" fill="#2f4fa8"/><path d="M9 1q4 0 4 4" stroke="#2f4fa8" stroke-width="1.600" fill="none"/></svg><svg class="a" style="left:731px;top:230px" width="17" height="18" viewBox="0 0 17 18"><path d="M1 6l7-3 7 3-7 3z" fill="#dfe8f4" stroke="#7a8aa8" stroke-width=".7"/><path d="M1 9l7 3 7-3M1 12l7 3 7-3" fill="none" stroke="#8a9ab8" stroke-width="1.500"/><rect x="7" y="8" width="9.500" height="8.500" fill="#e8f0fc" stroke="#1f3a8f" stroke-width="1.200"/><rect x="7" y="8" width="9.500" height="2.200" fill="#2f5fc8"/><path d="M9 13h5.500" stroke="#1f3a8f" stroke-width="1"/></svg><div class="a" style="left:752px;top:227px;width:2px;height:24px;border-left:1px solid #aca899;border-right:1px solid #fff"></div><div class="a" style="left:757px;top:227px;width:2px;height:23px;border-left:1px solid #fff;border-right:1px solid #aca899"></div><div class="a" style="left:760px;top:227px;width:2px;height:23px;border-left:1px solid #fff;border-right:1px solid #aca899"></div><div class="a" style="left:768px;top:229px;width:151px;height:21px;background:#fff;border:1px solid #7f9db9"></div><div class="a" style="left:775px;top:234px;width:11px;height:11px;background:#ffff00;border:1px solid #000"></div><span class="m" style="left:789px;top:235px;font-size:12px;color:#000;transform:scaleX(0.8333)">ByLayer</span><svg class="a" style="left:902px;top:231px" width="16" height="17" viewBox="0 0 16 17" style="left:902px;top:231px;background:linear-gradient(#d9e4fd,#b4c9f7);border-radius:2px"><rect x=".5" y=".5" width="15" height="16" rx="2" fill="#c6d6fb" stroke="#b0c4f2"/><path d="M4.48 6.46l3.52 4.08l3.52 -4.08" fill="none" stroke="#4d6185" stroke-width="2"/></svg><div class="a" style="left:925px;top:229px;width:84px;height:21px;background:#fff;border:1px solid #7f9db9;border-right:0"></div><div class="a" style="left:930px;top:239px;width:60px;height:1px;background:#000"></div><div class="a" style="left:995px;top:230px;width:14px;height:19px;overflow:hidden"><span class="m" style="left:0px;top:5px;font-size:12px;color:#000;transform:scaleX(0.8333)">ByL</span></div><svg class="a" style="left:361px;top:259px" width="16" height="16" viewBox="0 0 16 16"><path d="M8 0v16M0 8h16" stroke="#30d030" stroke-width="1.300" stroke-dasharray="3.500 1.500 1 1.500"/></svg><svg class="a" style="left:385px;top:259px" width="16" height="16" viewBox="0 0 16 16"><path d="M0 8.500h5l2.500-5 2 9.500 2-4.500h4.500" stroke="#1f1fc0" stroke-width="1.500" fill="none"/></svg><div class="a" style="left:407px;top:256px;width:2px;height:22px;border-left:1px solid #c5c2b2;border-right:1px solid #fff"></div><svg class="a" style="left:414px;top:259px" width="16" height="16" viewBox="0 0 16 16"><path d="M0 2.500h16M0 13.500h16" stroke="#222" stroke-width="1.400"/><path d="M0 8h16" stroke="#30d030" stroke-width="1.400" stroke-dasharray="4 1.500"/></svg><svg class="a" style="left:437px;top:259px" width="16" height="16" viewBox="0 0 16 16"><path d="M1.500 10.500l9.500-9.500" stroke="#2a4a3a" stroke-width="1.600"/><path d="M4 15l10-10.500" stroke="#c03030" stroke-width="1.600"/></svg><svg class="a" style="left:460px;top:259px" width="16" height="16" viewBox="0 0 16 16"><path d="M5.500 1.500v13M10 1.500v13M0 5.500h5.500M0 10.500h5.500M10 5.500h6M10 10.500h6" stroke="#222" stroke-width="1.400"/></svg><div class="a" style="left:482px;top:256px;width:2px;height:22px;border-left:1px solid #c5c2b2;border-right:1px solid #fff"></div><svg class="a" style="left:490px;top:259px" width="16" height="16" viewBox="0 0 16 16"><clipPath id="hc"><rect x="1.500" y="1.500" width="12" height="12"/></clipPath><rect x="1.500" y="1.500" width="12" height="12" fill="#f5b0a8"/><g clip-path="url(#hc)"><path d="M4 1l-14 14" stroke="#e04040" stroke-width=".9"/><path d="M7 1l-14 14" stroke="#e04040" stroke-width=".9"/><path d="M10 1l-14 14" stroke="#e04040" stroke-width=".9"/><path d="M13 1l-14 14" stroke="#e04040" stroke-width=".9"/><path d="M16 1l-14 14" stroke="#e04040" stroke-width=".9"/><path d="M19 1l-14 14" stroke="#e04040" stroke-width=".9"/><path d="M22 1l-14 14" stroke="#e04040" stroke-width=".9"/><path d="M25 1l-14 14" stroke="#e04040" stroke-width=".9"/><path d="M28 1l-14 14" stroke="#e04040" stroke-width=".9"/></g><rect x="1.500" y="1.500" width="12" height="12" fill="none" stroke="#222" stroke-width="1.300"/></svg><svg class="a" style="left:512px;top:259px" width="16" height="16" viewBox="0 0 16 16"><path d="M1 1.500h14M1 7.500h14" stroke="#222" stroke-width="1.400"/><path d="M1 4.500h14" stroke="#30d030" stroke-width="1.400"/><path d="M5 15v-4.500q0-3 3-3t3 3v4.500" stroke="#222" stroke-width="1.400" fill="none"/><path d="M7 15v-5M9 15v-5" stroke="#30d030" stroke-width="1"/></svg><div class="a" style="left:534px;top:255px;width:2px;height:24px;border-left:1px solid #aca899;border-right:1px solid #fff"></div><div class="a" style="left:538px;top:255px;width:2px;height:23px;border-left:1px solid #fff;border-right:1px solid #aca899"></div><div class="a" style="left:541px;top:255px;width:2px;height:23px;border-left:1px solid #fff;border-right:1px solid #aca899"></div><svg class="a" style="left:553px;top:259px" width="16" height="16" viewBox="0 0 16 16"><path d="M3 13l10-10" stroke="#222" stroke-width="1.500"/><rect x="11.500" y="1.500" width="3" height="3" fill="#1b1bb4"/><rect x="1.500" y="11.500" width="3" height="3" fill="#1b1bb4"/><path d="M16 11.500v4.500h-4.500z" fill="#000"/></svg><svg class="a" style="left:577px;top:259px" width="16" height="16" viewBox="0 0 16 16"><circle cx="7" cy="7.500" r="6.300" fill="none" stroke="#222" stroke-width="1.100"/><circle cx="7" cy="7.500" r="3.800" fill="none" stroke="#222" stroke-width="1.100"/><circle cx="7" cy="7.500" r="2" fill="none" stroke="#30c030" stroke-width="1.100"/><path d="M16 11.500v4.500h-4.500z" fill="#000"/></svg><svg class="a" style="left:600px;top:259px" width="16" height="16" viewBox="0 0 16 16"><path d="M7.500 1l6 5-2.500 6h-7l-2.500-6z" fill="#f4f7fc" stroke="#222" stroke-width="1.300"/><path d="M3 14.500h8" stroke="#e03030" stroke-width="1.500"/><path d="M16 11.500v4.500h-4.500z" fill="#000"/></svg><svg class="a" style="left:623px;top:259px" width="16" height="16" viewBox="0 0 16 16"><path d="M.5 8.500q2-5 4-1.500t3.500 1 3-2.500 3.500 5" stroke="#222" stroke-width="1.400" fill="none"/><path d="M16 11.500v4.500h-4.500z" fill="#000"/></svg><svg class="a" style="left:646px;top:259px" width="16" height="16" viewBox="0 0 16 16"><path d="M2.500 4.500h9v5.500h-9zM7 1v14" stroke="#222" stroke-width="1.400" fill="none"/><path d="M16 11.500v4.500h-4.500z" fill="#000"/></svg><div class="a" style="left:667px;top:256px;width:2px;height:22px;border-left:1px solid #c5c2b2;border-right:1px solid #fff"></div><svg class="a" style="left:674px;top:259px" width="16" height="16" viewBox="0 0 16 16"><path d="M8 0v16M0 8h16" stroke="#30d030" stroke-width="1.300" stroke-dasharray="3.500 1.500 1 1.500"/><path d="M16 11.500v4.500h-4.500z" fill="#000"/></svg><svg class="a" style="left:699px;top:259px" width="16" height="16" viewBox="0 0 16 16"><path d="M12.500 3h-7v8" stroke="#222" stroke-width="2" fill="none"/><path d="M2.500 9h6l-3 4.500z" fill="#222"/></svg><svg class="a" style="left:720px;top:259px" width="16" height="16" viewBox="0 0 16 16"><path d="M4 2.500h8l3.500 5.500-3.500 5.500h-8l-3.500-5.500z" fill="none" stroke="#222" stroke-width="1.400"/><path d="M4.500 4.500h7l2 3.500-2 3.500h-7l-2-3.500z" fill="none" stroke="#30c030" stroke-width="1.300"/><path d="M4 8h8" stroke="#30c030" stroke-width="1" stroke-dasharray="2 1"/></svg><svg class="a" style="left:743px;top:259px" width="16" height="16" viewBox="0 0 16 16"><path d="M0 3.500h16M0 12.500h16M4.500 3.500v9M11 3.500v9" stroke="#222" stroke-width="1.600"/><path d="M7.800 0v16" stroke="#30c030" stroke-width="1.100"/></svg><svg class="a" style="left:766px;top:259px" width="16" height="16" viewBox="0 0 16 16"><path d="M0 8l7-5v10z" fill="#111"/><path d="M6 8h10" stroke="#444" stroke-width="1.500"/></svg><div class="a" style="left:788px;top:256px;width:2px;height:22px;border-left:1px solid #c5c2b2;border-right:1px solid #fff"></div><svg class="a" style="left:795px;top:259px" width="16" height="16" viewBox="0 0 16 16"><path d="M1 2h14v9h-5.500v3.500h-8.500z" fill="none" stroke="#222" stroke-width="1.400"/><path d="M1 5h4v-3" stroke="#222" stroke-width="1" fill="none"/><path d="M9.500 11h5.500" stroke="#222" stroke-width="1"/><path d="M16 11.500v4.500h-4.500z" fill="#000"/></svg><div class="a" style="left:817px;top:255px;width:2px;height:24px;border-left:1px solid #aca899;border-right:1px solid #fff"></div><div class="a" style="left:821px;top:255px;width:2px;height:23px;border-left:1px solid #fff;border-right:1px solid #aca899"></div><div class="a" style="left:824px;top:255px;width:2px;height:23px;border-left:1px solid #fff;border-right:1px solid #aca899"></div><svg class="a" style="left:836px;top:259px" width="16" height="16" viewBox="0 0 16 16"><path d="M.7 1h14.600v13.500h-14.600z" fill="none" stroke="#222" stroke-width="1.300"/><rect x=".7" y="6.500" width="14.600" height="3.500" fill="#111"/><path d="M16 11.500v4.500h-4.500z" fill="#000"/></svg><svg class="a" style="left:860px;top:259px" width="16" height="16" viewBox="0 0 16 16"><path d="M1 2h13" stroke="#111" stroke-width="2.200"/><path d="M7 14.500h8" stroke="#111" stroke-width="1.400"/><path d="M1.500 13q5-1 7-7" stroke="#e04040" stroke-width="1.300" fill="none"/><path d="M9.500 4.500l-3.500 1.500 2.500 2z" fill="#e04040"/><path d="M16 11.500v4.500h-4.500z" fill="#000"/></svg><svg class="a" style="left:882px;top:259px" width="16" height="16" viewBox="0 0 16 16"><path d="M3 1h13v12h-3" fill="#111"/><path d="M1 4l9-1.500 3 1.500-9 1.500zM1 7l9-1.500 3 1.500-9 1.500z" fill="#f4f4f4" stroke="#222" stroke-width=".7"/><path d="M1 10.500l9-1.500 3 1.500v2.500l-9 1.500-3-1.500z" fill="#f0e020" stroke="#222" stroke-width=".7"/><path d="M16 11.500v4.500h-4.500z" fill="#000"/></svg><div class="a" style="left:904px;top:256px;width:2px;height:22px;border-left:1px solid #c5c2b2;border-right:1px solid #fff"></div><svg class="a" style="left:911px;top:259px" width="16" height="16" viewBox="0 0 16 16"><path d="M1.500 3.500h11" stroke="#e03030" stroke-width="1.200"/><path d="M1.500 1.500v12M12.500 1.500v3" stroke="#e03030" stroke-width="1.100"/><path d="M2.500 2.500l-1 1 1 1M11.500 2.500l1 1-1 1" stroke="#e03030" stroke-width=".9" fill="none"/><path d="M1.500 5v9M12.500 5.500h1.500v8h-1.500" stroke="#111" stroke-width="1.400" fill="none"/><rect x="12" y="7" width="2.500" height="4" fill="#fff" stroke="#111" stroke-width=".9"/><path d="M16 11.500v4.500h-4.500z" fill="#000"/></svg><div class="a" style="left:933px;top:256px;width:2px;height:22px;border-left:1px solid #c5c2b2;border-right:1px solid #fff"></div><svg class="a" style="left:941px;top:259px" width="16" height="16" viewBox="0 0 16 16"><path d="M14 1.500h-8q-5 0-5 6.500t5 6.500h8z" fill="#f4f6fa" stroke="#333" stroke-width="1.200"/><path d="M1 8h15" stroke="#30d080" stroke-width="1.100" stroke-dasharray="2.500 1.200"/><path d="M12 3v10" stroke="#30d080" stroke-width="1.100"/><path d="M16 11.500v4.500h-4.500z" fill="#000"/></svg><div class="a" style="left:962px;top:256px;width:2px;height:22px;border-left:1px solid #c5c2b2;border-right:1px solid #fff"></div><svg class="a" style="left:969px;top:259px" width="16" height="16" viewBox="0 0 16 16"><circle cx="5" cy="5" r="3.800" fill="none" stroke="#c02030" stroke-width="1.300"/><path d="M5 2.500v5M2.500 5h5" stroke="#208030" stroke-width="1"/><path d="M8 8l6 6" stroke="#111" stroke-width="2.400"/><path d="M16 11.500v4.500h-4.500z" fill="#000"/></svg><div class="a" style="left:991px;top:256px;width:2px;height:22px;border-left:1px solid #c5c2b2;border-right:1px solid #fff"></div><svg class="a" style="left:998px;top:259px" width="11" height="16" viewBox="0 0 11 16"><path d="M1 2h13" stroke="#111" stroke-width="2.200"/><path d="M1.500 13q5-1 7-7" stroke="#e04040" stroke-width="1.300" fill="none"/><path d="M7 14.500h8" stroke="#111" stroke-width="1.400"/></svg><svg class="a" style="left:361px;top:287px" width="16" height="16" viewBox="0 0 16 16"><path d="M3 13l10-10" stroke="#222" stroke-width="1.500"/><rect x="11.500" y="1.500" width="3" height="3" fill="#1b1bb4"/><rect x="1.500" y="11.500" width="3" height="3" fill="#1b1bb4"/></svg><div class="a" style="left:384px;top:292px;width:17px;height:5px;background:#000"></div><div class="a" style="left:408px;top:294px;width:16px;height:2px;background:#e85050"></div><div class="a" style="left:432px;top:294px;width:16px;height:2px;background:#f4ee7a"></div><svg class="a" style="left:453px;top:293px" width="18" height="4" viewBox="0 0 18 4"><path d="M0 2h18" stroke="#60e080" stroke-width="2" stroke-dasharray="5 1.500"/></svg><svg class="a" style="left:477px;top:293px" width="18" height="4" viewBox="0 0 18 4"><path d="M0 2h18" stroke="#60e8d8" stroke-width="2" stroke-dasharray="2 1.800"/></svg><div class="a" style="left:499px;top:284px;width:2px;height:22px;border-left:1px solid #c5c2b2;border-right:1px solid #fff"></div><svg class="a" style="left:506px;top:287px" width="16" height="16" viewBox="0 0 16 16"><path d="M1.500 3v9.500h7v-9.500h6" stroke="#222" stroke-width="1.500" fill="none"/></svg><svg class="a" style="left:529px;top:287px" width="16" height="16" viewBox="0 0 16 16"><path d="M1 15l14-14" stroke="#222" stroke-width="1.400"/><path d="M5 11l4-4M11 5l3-3" stroke="#e03030" stroke-width="2"/><path d="M10 3l2 2M12 1.500l2.500 2.500" stroke="#e03030" stroke-width="1.200"/></svg><svg class="a" style="left:552px;top:287px" width="16" height="16" viewBox="0 0 16 16"><path d="M2.500 2v12M13.500 2v12" stroke="#111" stroke-width="2.200"/><path d="M8 0v16" stroke="#30c030" stroke-width="1.200" stroke-dasharray="3 1 1 1"/></svg><div class="a" style="left:574px;top:284px;width:2px;height:22px;border-left:1px solid #c5c2b2;border-right:1px solid #fff"></div><svg class="a" style="left:581px;top:287px" width="16" height="16" viewBox="0 0 16 16"><path d="M3 15l12-13" stroke="#222" stroke-width="1.500"/><path d="M2 8l6-6" stroke="#e03030" stroke-width="1.200"/><path d="M2 8l.5-3M2 8l3-.5M8 2l-3 .5M8 2l-.5 3" stroke="#e03030" stroke-width="1.100"/></svg><svg class="a" style="left:605px;top:287px" width="16" height="16" viewBox="0 0 16 16"><path d="M6 2l-4.500 12 12-8" stroke="#222" stroke-width="1.500" fill="none"/><rect x="4.500" y="0.5" width="3" height="3" fill="#1b1bb4"/><rect x="12" y="4.500" width="3" height="3" fill="#1b1bb4"/></svg><svg class="a" style="left:627px;top:287px" width="16" height="16" viewBox="0 0 16 16"><path d="M14 1.500l-12.500 13h14" stroke="#222" stroke-width="1.500" fill="none"/><path d="M6 14.500q0-3-2.500-4.500" stroke="#c03030" stroke-width="1.200" fill="none"/></svg><div class="a" style="left:649px;top:284px;width:2px;height:22px;border-left:1px solid #c5c2b2;border-right:1px solid #fff"></div><svg class="a" style="left:656px;top:287px" width="16" height="16" viewBox="0 0 16 16"><path d="M0 4.500h16M2.500 4.500v9M6.500 4.500v9M10.500 4.500v9M14.500 4.500v9" stroke="#d02020" stroke-width="1.400"/></svg><svg class="a" style="left:679px;top:287px" width="16" height="16" viewBox="0 0 16 16"><path d="M1 3.500h14M1 12.500h14" stroke="#222" stroke-width="1.400"/><path d="M1 6.500h14M1 9.500h14" stroke="#40c040" stroke-width="1.300" stroke-dasharray="4 1.500"/></svg><div class="a" style="left:701px;top:284px;width:2px;height:22px;border-left:1px solid #c5c2b2;border-right:1px solid #fff"></div><svg class="a" style="left:708px;top:287px" width="16" height="16" viewBox="0 0 16 16"><path d="M8 1v14M1.500 4l13 8M1.500 12l13-8" stroke="#222" stroke-width="1.500"/></svg><div class="a" style="left:732px;top:295px;width:14px;height:1.5px;background:#222"></div><div class="a" style="left:753px;top:283px;width:2px;height:24px;border-left:1px solid #aca899;border-right:1px solid #fff"></div><div class="a" style="left:757px;top:283px;width:2px;height:23px;border-left:1px solid #fff;border-right:1px solid #aca899"></div><div class="a" style="left:760px;top:283px;width:2px;height:23px;border-left:1px solid #fff;border-right:1px solid #aca899"></div><svg class="a" style="left:771px;top:287px" width="16" height="16" viewBox="0 0 16 16"><path d="M3 8h9" stroke="#3a6aa8" stroke-width="1.500"/><rect x="1" y="6" width="4.500" height="4" fill="#2f6ab8"/><circle cx="13" cy="8" r="2.400" fill="#cfe6ff" stroke="#2a6fc0" stroke-width="1.100"/></svg><svg class="a" style="left:795px;top:287px" width="16" height="16" viewBox="0 0 16 16"><path d="M3 11v-7.500h9" stroke="#333" stroke-width="1.300" fill="none" stroke-dasharray="3 1.300"/><path d="M1.500 11.500h3v4h-3z" fill="#2f5a98"/><circle cx="13.500" cy="3.500" r="2.200" fill="#cfe6ff" stroke="#2a6fc0" stroke-width="1.100"/></svg><div class="a" style="left:817px;top:284px;width:2px;height:22px;border-left:1px solid #c5c2b2;border-right:1px solid #fff"></div><svg class="a" style="left:824px;top:287px" width="16" height="16" viewBox="0 0 16 16"><path d="M3 13l10-10" stroke="#222" stroke-width="1.500"/><circle cx="13.500" cy="2.800" r="2.300" fill="#cfe6ff" stroke="#2a6fc0" stroke-width="1.100"/><circle cx="2.800" cy="13.200" r="2.300" fill="#cfe6ff" stroke="#2a6fc0" stroke-width="1.100"/></svg><svg class="a" style="left:847px;top:287px" width="16" height="16" viewBox="0 0 16 16"><path d="M1 15l14-14" stroke="#222" stroke-width="1.500"/><circle cx="8" cy="8" r="2.300" fill="#cfe6ff" stroke="#2a6fc0" stroke-width="1.100"/></svg><svg class="a" style="left:870px;top:287px" width="16" height="16" viewBox="0 0 16 16"><path d="M1.500 1.500l13 13M14.500 1.500l-13 13" stroke="#222" stroke-width="1.600"/><rect x="6" y="6" width="4" height="4" fill="#7fc8f8" stroke="#2a6fc0" stroke-width=".8"/></svg><svg class="a" style="left:893px;top:287px" width="16" height="16" viewBox="0 0 16 16"><path d="M1.500 1.500l13 13" stroke="#222" stroke-width="1.500"/><path d="M14.500 1.500l-13 13" stroke="#222" stroke-width="1.500" stroke-dasharray="3.500 2"/><rect x="6" y="6" width="4" height="4" fill="#7fc8f8" stroke="#2a6fc0" stroke-width=".8"/></svg><svg class="a" style="left:916px;top:293px" width="17" height="4" viewBox="0 0 17 4"><path d="M0 2h8" stroke="#444" stroke-width="2"/><path d="M9.500 2h8" stroke="#444" stroke-width="2" stroke-dasharray="1.500 1.300"/></svg><div class="a" style="left:938px;top:284px;width:2px;height:22px;border-left:1px solid #c5c2b2;border-right:1px solid #fff"></div><svg class="a" style="left:945px;top:287px" width="16" height="16" viewBox="0 0 16 16"><circle cx="8" cy="8" r="6.800" fill="#e9f1fb" stroke="#222" stroke-width="1.300"/><circle cx="8" cy="8" r="1.800" fill="#cfe6ff" stroke="#2a6fc0" stroke-width="1.100"/></svg><svg class="a" style="left:968px;top:287px" width="16" height="16" viewBox="0 0 16 16"><path d="M8 1.500l6.500 6.500-6.500 6.500-6.500-6.500z" fill="none" stroke="#2a6fc0" stroke-width="1.200"/><circle cx="8" cy="8" r="5.300" fill="#d4dbe4" stroke="#555" stroke-width="1"/><circle cx="8" cy="2" r="2" fill="#cfe6ff" stroke="#2a6fc0" stroke-width="1.100"/><circle cx="8" cy="14" r="2" fill="#cfe6ff" stroke="#2a6fc0" stroke-width="1.100"/><circle cx="2" cy="8" r="2" fill="#cfe6ff" stroke="#2a6fc0" stroke-width="1.100"/><circle cx="14" cy="8" r="2" fill="#cfe6ff" stroke="#2a6fc0" stroke-width="1.100"/></svg><svg class="a" style="left:991px;top:287px" width="16" height="16" viewBox="0 0 16 16"><circle cx="9" cy="9" r="6.200" fill="#e9f1fb" stroke="#222" stroke-width="1.300"/><path d="M0 8l8-7" stroke="#222" stroke-width="1.200"/><circle cx="4.500" cy="4.200" r="2" fill="#cfe6ff" stroke="#2a6fc0" stroke-width="1.100"/></svg>
<div class="a" style="left:373px;top:309px;width:592px;height:369px;background:#000;border-top:1px solid #716f64;border-left:1px solid #716f64"></div>
<svg class="a" style="left:374px;top:310px" width="590" height="367" viewBox="374 310 590 367" shape-rendering="crispEdges"><rect x="415" y="313.5" width="509" height="359.5" stroke="#ffffff" fill="none" stroke-width="1"/><rect x="435.5" y="322.5" width="480.5" height="342.5" stroke="#ffff7f" fill="none" stroke-width="1"/><path d="M435.5 332.5 L488 332.5 L488 322.5" stroke="#ffff7f" stroke-width="1" fill="none"/><path d="M449 327.5H469" stroke="#30f0f0" stroke-width="3.500" stroke-dasharray="1.700 .600" opacity=".88"/><path d="M415 493 L435.5 493" stroke="#ffff7f" stroke-width="1" fill="none"/><rect x="428.5" y="592" width="7" height="73" stroke="#ffd070" fill="none" stroke-width="1"/><path d="M428.5 635 L435.5 635" stroke="#ffd070" stroke-width="1" fill="none"/><path d="M428.5 655.5 L435.5 655.5" stroke="#ffd070" stroke-width="1" fill="none"/><path d="M432 602V616" stroke="#30f0f0" stroke-width="3.500" stroke-dasharray="1.700 .600" opacity=".88"/><rect x="429.500" y="637" width="5" height="17" fill="#30ff30"/><path d="M432 657V663" stroke="#30f0f0" stroke-width="3" stroke-dasharray="1.700 .600" opacity=".88"/><path d="M760 322.5 L760 335.5" stroke="#ffff7f" stroke-width="1" fill="none"/><path d="M769.5 322.5 L769.5 335.5" stroke="#ffff7f" stroke-width="1" fill="none"/><path d="M803 322.5 L803 335.5" stroke="#ffff7f" stroke-width="1" fill="none"/><path d="M863 322.5 L863 335.5" stroke="#ffff7f" stroke-width="1" fill="none"/><path d="M889.5 322.5 L889.5 335.5" stroke="#ffff7f" stroke-width="1" fill="none"/><path d="M762 335.5 L914 335.5" stroke="#0a0ae6" stroke-width="1.300" fill="none"/><path d="M760 328.5 L916 328.5" stroke="#ffff7f" stroke-width="1" fill="none"/><path d="M762 325.5H768" stroke="#40ff40" stroke-width="4.500" stroke-dasharray="1.700 .600" opacity=".88"/><path d="M782 325.5H791" stroke="#40ff40" stroke-width="4.500" stroke-dasharray="1.700 .600" opacity=".88"/><path d="M828 325.5H841" stroke="#40ff40" stroke-width="4.500" stroke-dasharray="1.700 .600" opacity=".88"/><path d="M875 325.5H881" stroke="#40ff40" stroke-width="4.500" stroke-dasharray="1.700 .600" opacity=".88"/><path d="M901 325.5H907" stroke="#40ff40" stroke-width="4.500" stroke-dasharray="1.700 .600" opacity=".88"/><path d="M914 342V358" stroke="#fff" stroke-width="1" stroke-dasharray="3 2.500"/><path d="M772 482.5 L447.5 482.5 L447.5 495.5 L772 495.5" stroke="#ffff7f" stroke-width="1" fill="none"/><path d="M448 485.5 L772 485.5" stroke="#ffffff" stroke-width="1" fill="none"/><path d="M447.5 497.5 L461.5 497.5 L461.5 495.5" stroke="#ffff7f" stroke-width="1" fill="none"/><path d="M458.5 440 L458.5 491.5 L465.5 491.5 L465.5 440" stroke="#ffff7f" stroke-width="1" fill="none"/><path d="M463.3 440 L463.3 491" stroke="#ffff7f" stroke-width="0.6" fill="none"/><path d="M546.8 461 L546.8 492" stroke="#ffff00" stroke-width="2" fill="none"/><path d="M564 461 L564 492" stroke="#ffff00" stroke-width="2" fill="none"/><path d="M654 461 L654 492" stroke="#ffff00" stroke-width="2" fill="none"/><path d="M672 461 L672 492" stroke="#ffff00" stroke-width="2" fill="none"/><path d="M454.5 478.5 L454.5 499" stroke="#e020e0" stroke-width="1" fill="none"/><path d="M609 461 L609 505" stroke="#e020e0" stroke-width="1" fill="none"/><path d="M564 469.5 L655 469.5" stroke="#40ff40" stroke-width="1" fill="none"/><path d="M584.5 465 L584.5 471 L583 468" stroke="#40ff40" stroke-width="1" fill="none"/><path d="M447.5 497 L447.5 529" stroke="#40ff40" stroke-width="1" fill="none"/><path d="M454.5 499 L454.5 516" stroke="#40ff40" stroke-width="1" fill="none"/><path d="M454.5 512.5 L764.5 512.5" stroke="#40ff40" stroke-width="1" fill="none"/><path d="M447.5 525.5 L772 525.5" stroke="#40ff40" stroke-width="1" fill="none"/><path d="M764.5 497 L764.5 516" stroke="#40ff40" stroke-width="1" fill="none"/><path d="M772 482 L772 529" stroke="#40ff40" stroke-width="1" fill="none"/><path d="M457.5 511.5 L454.5 512.5 L457.5 513.5" stroke="#40ff40" stroke-width="1" fill="none"/><path d="M450.5 524.5 L447.5 525.5 L450.5 526.5" stroke="#40ff40" stroke-width="1" fill="none"/><path d="M601.5 509H617.5" stroke="#30f0f0" stroke-width="3.500" stroke-dasharray="1.700 .600" opacity=".88"/><path d="M606 522H614" stroke="#30f0f0" stroke-width="3.500" stroke-dasharray="1.700 .600" opacity=".88"/><path d="M474 397.5 L483 389.5 L489 387.5 L545 421" stroke="#ffff7f" stroke-width="1" fill="none"/><path d="M478 398 L486 391" stroke="#ffff00" stroke-width="2" fill="none"/><path d="M492 392 L546 424" stroke="#ffff7f" stroke-width="1" fill="none"/><path d="M517 444 L545 462.5" stroke="#ffff7f" stroke-width="1" fill="none"/><path d="M470 390.5 L477 396.5" stroke="#e020e0" stroke-width="1" fill="none"/><path d="M538.5 440 L547 446" stroke="#e020e0" stroke-width="1" fill="none"/><path d="M506.5 396 L519 378 L549.5 396.5" stroke="#40ff40" stroke-width="1" fill="none"/><path d="M515 384 L552 405" stroke="#40ff40" stroke-width="0.8" fill="none"/><path d="M662 402.5 L699.5 378 L712.5 397.5" stroke="#40ff40" stroke-width="1" fill="none"/><path d="M690 389 L700 380.5" stroke="#40ff40" stroke-width="0.8" fill="none"/><path d="M690 409 L701 404 L729 388" stroke="#ffff7f" stroke-width="1" fill="none"/><path d="M705.5 403 L713 397.5" stroke="#ffffff" stroke-width="1" fill="none"/><path d="M715 433.5 L745.5 413.5" stroke="#ffff7f" stroke-width="1" fill="none"/><path d="M722.5 409.5 L747 392" stroke="#e020e0" stroke-width="1" fill="none"/><path d="M729.5 388 L760.8 420 L760.8 491" stroke="#ffff7f" stroke-width="1" fill="none"/><path d="M735.8 389.8 L754 421 L754 491" stroke="#ffff7f" stroke-width="1" fill="none"/><path d="M734.8 391.5 L752.5 418" stroke="#ffffff" stroke-width="1" fill="none"/><path d="M732.5 392.5 L750 419" stroke="#ffff00" stroke-width="1" fill="none"/><path d="M754 491.5 L761 491.5" stroke="#ffff7f" stroke-width="1" fill="none"/><path d="M761 482.5 L772 482.5" stroke="#ffff7f" stroke-width="1" fill="none"/><path d="M729 387.5 L794.5 387.5" stroke="#40ff40" stroke-width="1" fill="none"/><path d="M792.8 387.5 L792.8 497.5" stroke="#40ff40" stroke-width="1" fill="none"/><path d="M705.8 497.5 L794.5 497.5" stroke="#40ff40" stroke-width="1" fill="none"/><path d="M705.8 462 L705.8 497.5" stroke="#40ff40" stroke-width="1" fill="none"/><path d="M791.5 391 L792.8 388 L794 391" stroke="#40ff40" stroke-width="1" fill="none"/><path d="M791.5 494 L792.8 497 L794 494" stroke="#40ff40" stroke-width="1" fill="none"/><path d="M789 436V446" stroke="#30f0f0" stroke-width="3.500" stroke-dasharray="1.700 .600" opacity=".88"/><path d="M703 468V480" stroke="#30f0f0" stroke-width="3.500" stroke-dasharray="1.700 .600" opacity=".88"/><path d="M778 488.5 L778 504" stroke="#40ff40" stroke-width="1" fill="none"/><path d="M773 493.5H780" stroke="#40ff40" stroke-width="3" stroke-dasharray="1.700 .600" opacity=".88"/><path d="M775 490 L775 500" stroke="#e020e0" stroke-width="0.8" fill="none"/><text x="745" y="358.800" font-family="Liberation Sans,sans-serif" font-size="8" fill="#30f0f0" shape-rendering="geometricPrecision">1</text><path d="M743 361.5 L751.5 361.5 L720.5 406" stroke="#30f0f0" stroke-width="1" fill="none"/><text x="785" y="358.800" font-family="Liberation Sans,sans-serif" font-size="8" fill="#30f0f0" shape-rendering="geometricPrecision">2</text><path d="M781.5 361.5 L792 361.5 L763 482.5" stroke="#30f0f0" stroke-width="1" fill="none"/><text x="823.500" y="358.300" font-family="Liberation Sans,sans-serif" font-size="8" fill="#30f0f0" shape-rendering="geometricPrecision" textLength="39" lengthAdjust="spacing">3 4 5 6 7</text><path d="M823 359.5 L828 359.5 L830.5 363 L833 359.5 L837 359.5 L839.5 363 L842 359.5 L846 359.5 L848.5 363 L851 359.5 L855 359.5 L857.5 363 L860 359.5 L864 359.5 L864 360 L849 490" stroke="#30f0f0" stroke-width="1" fill="none"/><path d="M819 460V399Q819 391 826 390.500H835.500Q842.500 391 842.500 399V460" stroke="#ffff7f" fill="none"/><path d="M822 398 L822 486 L818 496.5" stroke="#ffff00" stroke-width="1.600" fill="none"/><path d="M839.5 398 L839.5 486 L843.5 496.5" stroke="#ffff00" stroke-width="1.600" fill="none"/><path d="M822 398 L826 392.5 L835.5 392.5 L839.5 398" stroke="#ffff00" stroke-width="1" fill="none"/><path d="M830.8 388 L830.8 506" stroke="#e020e0" stroke-width="1" fill="none"/><path d="M826.500 396.500h8.500M828 396.500a2.800 3 0 0 0 5.600 0" stroke="#ffff7f" fill="none" shape-rendering="geometricPrecision"/><path d="M824.5 419 L836 419" stroke="#ffff7f" stroke-width="1" fill="none"/><path d="M818 496 L830.8 482.5 L843.5 496" stroke="#ffff00" stroke-width="1.400" fill="none"/><path d="M824 496 L830.8 488 L838 496" stroke="#ffff7f" stroke-width="1" fill="none"/><path d="M806.5 496.8 L854 496.8" stroke="#ffff7f" stroke-width="1" fill="none"/><path d="M806.5 496.8 L806.5 531" stroke="#40ff40" stroke-width="1" fill="none"/><path d="M854 496.8 L854 531" stroke="#40ff40" stroke-width="1" fill="none"/><path d="M811.5 488.5 L811.5 503" stroke="#ffff00" stroke-width="1.200" fill="none"/><path d="M809.5 491.5 L813.5 491.5" stroke="#ffff00" stroke-width="1" fill="none"/><path d="M811.5 503 L811.5 516" stroke="#40ff40" stroke-width="1" fill="none"/><path d="M849 488.5 L849 503" stroke="#ffff00" stroke-width="1.200" fill="none"/><path d="M847 491.5 L851 491.5" stroke="#ffff00" stroke-width="1" fill="none"/><path d="M849 503 L849 516" stroke="#40ff40" stroke-width="1" fill="none"/><path d="M811.5 515.5 L849 515.5" stroke="#40ff40" stroke-width="1" fill="none"/><path d="M806.5 528.8 L854 528.8" stroke="#40ff40" stroke-width="1" fill="none"/><path d="M827 511.5H834" stroke="#30f0f0" stroke-width="3" stroke-dasharray="1.700 .600" opacity=".88"/><path d="M827 524.5H834" stroke="#30f0f0" stroke-width="3" stroke-dasharray="1.700 .600" opacity=".88"/><rect x="760" y="574.5" width="156" height="55.5" stroke="#0a0ae6" fill="none" stroke-width="1"/><path d="M760 581.45 L916 581.45" stroke="#0a0ae6" stroke-width="1" fill="none"/><path d="M760 588.4 L916 588.4" stroke="#0a0ae6" stroke-width="1" fill="none"/><path d="M760 595.35 L916 595.35" stroke="#0a0ae6" stroke-width="1" fill="none"/><path d="M760 602.3 L916 602.3" stroke="#0a0ae6" stroke-width="1" fill="none"/><path d="M760 609.25 L916 609.25" stroke="#0a0ae6" stroke-width="1" fill="none"/><path d="M760 616.2 L916 616.2" stroke="#0a0ae6" stroke-width="1" fill="none"/><path d="M760 623.15 L916 623.15" stroke="#0a0ae6" stroke-width="1" fill="none"/><path d="M764.5 574.5 L764.5 630" stroke="#0a0ae6" stroke-width="1" fill="none"/><path d="M797 574.5 L797 630" stroke="#0a0ae6" stroke-width="1" fill="none"/><path d="M837 574.5 L837 630" stroke="#0a0ae6" stroke-width="1" fill="none"/><path d="M847 574.5 L847 630" stroke="#0a0ae6" stroke-width="1" fill="none"/><path d="M862 574.5 L862 630" stroke="#0a0ae6" stroke-width="1" fill="none"/><path d="M872 574.5 L872 630" stroke="#0a0ae6" stroke-width="1" fill="none"/><path d="M892 574.5 L892 630" stroke="#0a0ae6" stroke-width="1" fill="none"/><path d="M760 574.5 L760 630" stroke="#ffff7f" stroke-width="1" fill="none"/><path d="M765.5 578H767.5" stroke="#ffffff" stroke-width="4" stroke-dasharray="1.700 .600" opacity=".88"/><path d="M769 578H786" stroke="#30f0f0" stroke-width="4" stroke-dasharray="1.700 .600" opacity=".88"/><path d="M799 578H810" stroke="#30f0f0" stroke-width="4" stroke-dasharray="1.700 .600" opacity=".88"/><path d="M840.5 578H842" stroke="#30f0f0" stroke-width="4" stroke-dasharray="1.700 .600" opacity=".88"/><path d="M852 578H856" stroke="#30f0f0" stroke-width="4" stroke-dasharray="1.700 .600" opacity=".88"/><path d="M873 578H880" stroke="#30f0f0" stroke-width="4" stroke-dasharray="1.700 .600" opacity=".88"/><path d="M883 578H890" stroke="#30f0f0" stroke-width="4" stroke-dasharray="1.700 .600" opacity=".88"/><path d="M765.5 584.95H767.5" stroke="#ffffff" stroke-width="4" stroke-dasharray="1.700 .600" opacity=".88"/><path d="M769 584.95H783" stroke="#30f0f0" stroke-width="4" stroke-dasharray="1.700 .600" opacity=".88"/><path d="M799 584.95H810" stroke="#30f0f0" stroke-width="4" stroke-dasharray="1.700 .600" opacity=".88"/><path d="M840.5 584.95H842" stroke="#30f0f0" stroke-width="4" stroke-dasharray="1.700 .600" opacity=".88"/><path d="M852 584.95H856" stroke="#30f0f0" stroke-width="4" stroke-dasharray="1.700 .600" opacity=".88"/><path d="M873 584.95H880" stroke="#30f0f0" stroke-width="4" stroke-dasharray="1.700 .600" opacity=".88"/><path d="M883 584.95H890" stroke="#30f0f0" stroke-width="4" stroke-dasharray="1.700 .600" opacity=".88"/><path d="M765.5 591.9H767.5" stroke="#ffffff" stroke-width="4" stroke-dasharray="1.700 .600" opacity=".88"/><path d="M769 591.9H786" stroke="#30f0f0" stroke-width="4" stroke-dasharray="1.700 .600" opacity=".88"/><path d="M799 591.9H810" stroke="#30f0f0" stroke-width="4" stroke-dasharray="1.700 .600" opacity=".88"/><path d="M840.5 591.9H842" stroke="#30f0f0" stroke-width="4" stroke-dasharray="1.700 .600" opacity=".88"/><path d="M852 591.9H856" stroke="#30f0f0" stroke-width="4" stroke-dasharray="1.700 .600" opacity=".88"/><path d="M873 591.9H880" stroke="#30f0f0" stroke-width="4" stroke-dasharray="1.700 .600" opacity=".88"/><path d="M883 591.9H890" stroke="#30f0f0" stroke-width="4" stroke-dasharray="1.700 .600" opacity=".88"/><path d="M765.5 598.85H767.5" stroke="#ffffff" stroke-width="4" stroke-dasharray="1.700 .600" opacity=".88"/><path d="M769 598.85H782" stroke="#30f0f0" stroke-width="4" stroke-dasharray="1.700 .600" opacity=".88"/><path d="M799 598.85H811" stroke="#30f0f0" stroke-width="4" stroke-dasharray="1.700 .600" opacity=".88"/><path d="M840.5 598.85H842" stroke="#30f0f0" stroke-width="4" stroke-dasharray="1.700 .600" opacity=".88"/><path d="M852 598.85H856" stroke="#30f0f0" stroke-width="4" stroke-dasharray="1.700 .600" opacity=".88"/><path d="M873 598.85H880" stroke="#30f0f0" stroke-width="4" stroke-dasharray="1.700 .600" opacity=".88"/><path d="M883 598.85H890" stroke="#30f0f0" stroke-width="4" stroke-dasharray="1.700 .600" opacity=".88"/><path d="M765.5 605.8H767.5" stroke="#ffffff" stroke-width="4" stroke-dasharray="1.700 .600" opacity=".88"/><path d="M769 605.8H785" stroke="#30f0f0" stroke-width="4" stroke-dasharray="1.700 .600" opacity=".88"/><path d="M799 605.8H817" stroke="#30f0f0" stroke-width="4" stroke-dasharray="1.700 .600" opacity=".88"/><path d="M840.5 605.8H842" stroke="#30f0f0" stroke-width="4" stroke-dasharray="1.700 .600" opacity=".88"/><path d="M852 605.8H856" stroke="#30f0f0" stroke-width="4" stroke-dasharray="1.700 .600" opacity=".88"/><path d="M873 605.8H880" stroke="#30f0f0" stroke-width="4" stroke-dasharray="1.700 .600" opacity=".88"/><path d="M883 605.8H890" stroke="#30f0f0" stroke-width="4" stroke-dasharray="1.700 .600" opacity=".88"/><path d="M765.5 612.75H767.5" stroke="#ffffff" stroke-width="4" stroke-dasharray="1.700 .600" opacity=".88"/><path d="M769 612.75H788" stroke="#30f0f0" stroke-width="4" stroke-dasharray="1.700 .600" opacity=".88"/><path d="M799 612.75H804" stroke="#30f0f0" stroke-width="4" stroke-dasharray="1.700 .600" opacity=".88"/><path d="M840.5 612.75H842" stroke="#30f0f0" stroke-width="4" stroke-dasharray="1.700 .600" opacity=".88"/><path d="M852 612.75H856" stroke="#30f0f0" stroke-width="4" stroke-dasharray="1.700 .600" opacity=".88"/><path d="M873 612.75H880" stroke="#30f0f0" stroke-width="4" stroke-dasharray="1.700 .600" opacity=".88"/><path d="M883 612.75H890" stroke="#30f0f0" stroke-width="4" stroke-dasharray="1.700 .600" opacity=".88"/><path d="M765.5 619.7H767.5" stroke="#ffffff" stroke-width="4" stroke-dasharray="1.700 .600" opacity=".88"/><path d="M769 619.7H784" stroke="#30f0f0" stroke-width="4" stroke-dasharray="1.700 .600" opacity=".88"/><path d="M799 619.7H804" stroke="#30f0f0" stroke-width="4" stroke-dasharray="1.700 .600" opacity=".88"/><path d="M840.5 619.7H842" stroke="#30f0f0" stroke-width="4" stroke-dasharray="1.700 .600" opacity=".88"/><path d="M852 619.7H856" stroke="#30f0f0" stroke-width="4" stroke-dasharray="1.700 .600" opacity=".88"/><path d="M873 619.7H880" stroke="#30f0f0" stroke-width="4" stroke-dasharray="1.700 .600" opacity=".88"/><path d="M883 619.7H890" stroke="#30f0f0" stroke-width="4" stroke-dasharray="1.700 .600" opacity=".88"/><path d="M894 619H898" stroke="#30f0f0" stroke-width="4" stroke-dasharray="1.700 .600" opacity=".88"/><path d="M762 626.5H765.5" stroke="#40ff40" stroke-width="5" stroke-dasharray="1.700 .600" opacity=".88"/><path d="M773 626.5H776.5" stroke="#40ff40" stroke-width="5" stroke-dasharray="1.700 .600" opacity=".88"/><path d="M789 626.5H792.5" stroke="#40ff40" stroke-width="5" stroke-dasharray="1.700 .600" opacity=".88"/><path d="M805 626.5H808.5" stroke="#40ff40" stroke-width="5" stroke-dasharray="1.700 .600" opacity=".88"/><path d="M825 626.5H828.5" stroke="#40ff40" stroke-width="5" stroke-dasharray="1.700 .600" opacity=".88"/><path d="M836 626.5H839.5" stroke="#40ff40" stroke-width="5" stroke-dasharray="1.700 .600" opacity=".88"/><path d="M849 626.5H852.5" stroke="#40ff40" stroke-width="5" stroke-dasharray="1.700 .600" opacity=".88"/><path d="M864 626.5H867.5" stroke="#40ff40" stroke-width="5" stroke-dasharray="1.700 .600" opacity=".88"/><path d="M874 626.5H877.5" stroke="#40ff40" stroke-width="5" stroke-dasharray="1.700 .600" opacity=".88"/><path d="M884 626.5H887.5" stroke="#40ff40" stroke-width="5" stroke-dasharray="1.700 .600" opacity=".88"/><path d="M897 626.5H900.5" stroke="#40ff40" stroke-width="5" stroke-dasharray="1.700 .600" opacity=".88"/><path d="M909 626.5H912.5" stroke="#40ff40" stroke-width="5" stroke-dasharray="1.700 .600" opacity=".88"/><rect x="760" y="630" width="156" height="35" stroke="#ffff7f" fill="none" stroke-width="1"/><path d="M786.5 630 L786.5 665" stroke="#ffff7f" stroke-width="1" fill="none"/><path d="M812.8 630 L812.8 665" stroke="#ffff7f" stroke-width="1" fill="none"/><path d="M863 630 L863 665" stroke="#ffff7f" stroke-width="1" fill="none"/><path d="M812.8 654.5 L863 654.5" stroke="#ffff7f" stroke-width="1" fill="none"/><path d="M760 645.5 L812.8 645.5" stroke="#ffff7f" stroke-width="1" fill="none"/><path d="M863 640.5 L916 640.5" stroke="#ffff7f" stroke-width="1" fill="none"/><path d="M863 647.5 L916 647.5" stroke="#ffff7f" stroke-width="1" fill="none"/><path d="M863 653.5 L916 653.5" stroke="#ffff7f" stroke-width="1" fill="none"/><path d="M774 650 L786.5 650" stroke="#ffff7f" stroke-width="0.8" fill="none"/><path d="M799 650 L812.8 650" stroke="#ffff7f" stroke-width="0.8" fill="none"/><path d="M774 655 L786.5 655" stroke="#ffff7f" stroke-width="0.8" fill="none"/><path d="M799 655 L812.8 655" stroke="#ffff7f" stroke-width="0.8" fill="none"/><path d="M774 660 L786.5 660" stroke="#ffff7f" stroke-width="0.8" fill="none"/><path d="M799 660 L812.8 660" stroke="#ffff7f" stroke-width="0.8" fill="none"/><path d="M786.5 635 L812.8 635" stroke="#ffff7f" stroke-width="0.8" fill="none"/><path d="M786.5 640 L812.8 640" stroke="#ffff7f" stroke-width="0.8" fill="none"/><path d="M867 640.5 L867 653.5" stroke="#ffff7f" stroke-width="0.8" fill="none"/><path d="M877 640.5 L877 653.5" stroke="#ffff7f" stroke-width="0.8" fill="none"/><path d="M889 640.5 L889 653.5" stroke="#ffff7f" stroke-width="0.8" fill="none"/><path d="M900 640.5 L900 653.5" stroke="#ffff7f" stroke-width="0.8" fill="none"/><path d="M908 640.5 L908 653.5" stroke="#ffff7f" stroke-width="0.8" fill="none"/><path d="M904 653.5 L904 665" stroke="#ffff7f" stroke-width="0.8" fill="none"/><path d="M910 653.5 L910 665" stroke="#ffff7f" stroke-width="0.8" fill="none"/><path d="M763 635l8-1.500v7l-8-1.500z" stroke="#ff5a5a" fill="none"/><circle cx="779.500" cy="637.500" r="3.500" stroke="#ff5a5a" fill="none"/><circle cx="779.500" cy="637.500" r="1.600" stroke="#ff5a5a" fill="none"/><path d="M774 637.500h11M779.500 632.500v10" stroke="#fff" stroke-width=".7"/><rect x="761.500" y="647" width="11.500" height="17" fill="#30ff30"/><rect x="764" y="650" width="4" height="9" fill="#000" opacity=".6"/><rect x="788.500" y="647.500" width="9.500" height="13" fill="#30ff30"/><rect x="790.500" y="650" width="5" height="6" fill="#000" opacity=".7"/><rect x="790" y="661" width="6" height="3" fill="#30ff30"/><path d="M788 632.5H796" stroke="#40ff40" stroke-width="3.500" stroke-dasharray="1.700 .600" opacity=".88"/><path d="M800 662H806" stroke="#30f0f0" stroke-width="3" stroke-dasharray="1.700 .600" opacity=".88"/><path d="M820 644H837" stroke="#30f0f0" stroke-width="6" stroke-dasharray="1.700 .600" opacity=".88"/><text x="837.500" y="648" font-family="Liberation Sans,sans-serif" font-size="11" fill="#e8ffff" textLength="16" lengthAdjust="spacingAndGlyphs">(35°)</text><path d="M829 658.5H834" stroke="#30f0f0" stroke-width="3" stroke-dasharray="1.700 .600" opacity=".88"/><path d="M870 637H889" stroke="#ffffff" stroke-width="4" stroke-dasharray="1.700 .600" opacity=".88"/><path d="M865 644H874" stroke="#40ff40" stroke-width="5" stroke-dasharray="1.700 .600" opacity=".88"/><path d="M877 644H887" stroke="#40ff40" stroke-width="5" stroke-dasharray="1.700 .600" opacity=".88"/><path d="M890 644H902" stroke="#40ff40" stroke-width="5" stroke-dasharray="1.700 .600" opacity=".88"/><path d="M904 644H914" stroke="#40ff40" stroke-width="5" stroke-dasharray="1.700 .600" opacity=".88"/><path d="M865 650.5H868" stroke="#30f0f0" stroke-width="4" stroke-dasharray="1.700 .600" opacity=".88"/><path d="M892 650.5H898" stroke="#30f0f0" stroke-width="4" stroke-dasharray="1.700 .600" opacity=".88"/><circle cx="869" cy="658.500" r="3.200" stroke="#30ff30" stroke-width="1.600" fill="none"/><rect x="875" y="654.500" width="23" height="5" fill="#30ff30"/><path d="M876 662H900" stroke="#30f0f0" stroke-width="3.500" stroke-dasharray="1.700 .600" opacity=".88"/><path d="M911.5 657V663" stroke="#40ff40" stroke-width="3" stroke-dasharray="1.700 .600" opacity=".88"/><path d="M905.5 656V663" stroke="#40ff40" stroke-width="2.500" stroke-dasharray="1.700 .600" opacity=".88"/><rect x="381.5" y="662" width="7" height="7" stroke="#ffffff" fill="none" stroke-width="1"/><path d="M385 630 L385 662" stroke="#ffffff" stroke-width="1" fill="none"/><path d="M388.5 665.5 L420 665.5" stroke="#ffffff" stroke-width="1" fill="none"/><path d="M381.500 630l3.500-7.500 3.500 7.500z" stroke="#fff" fill="none"/><path d="M420 662l7.500 3.500-7.500 3.500z" stroke="#fff" fill="none"/><path d="M382 608l3 4.500 3-4.500M385 612.500v5" stroke="#fff" fill="none"/><path d="M435.500 661.500l6 8M441.500 661.500l-6 8" stroke="#fff" fill="none"/><g shape-rendering="geometricPrecision"><g stroke="#fff" stroke-width="5.500" stroke-linejoin="round" fill="#fff"><path d="M482.69 407.23 L483.38 401.12 L488.62 401.12 L489.31 407.23 L494.77 408.7 L498.42 403.74 L502.96 406.36 L500.5 412.01 L504.49 416 L510.14 413.54 L512.76 418.08 L507.8 421.73 L509.27 427.19 L515.38 427.88 L515.38 433.12 L509.27 433.81 L507.8 439.27 L512.76 442.92 L510.14 447.46 L504.49 445 L500.5 448.99 L502.96 454.64 L498.42 457.26 L494.77 452.3 L489.31 453.77 L488.62 459.88 L483.38 459.88 L482.69 453.77 L477.23 452.3 L473.58 457.26 L469.04 454.64 L471.5 448.99 L467.51 445 L461.86 447.46 L459.24 442.92 L464.2 439.27 L462.73 433.81 L456.62 433.12 L456.62 427.88 L462.73 427.19 L464.2 421.73 L459.24 418.08 L461.86 413.54 L467.51 416 L471.5 412.01 L469.04 406.36 L473.58 403.74 L477.23 408.7Z"/><path d="M473 423.5 Q469 418.0 461 418.0 Q444 420.5 429 435.0 Q435 439.5 440 438.0 Q444 442.5 450 441.0 Q454 445.5 460 443.5 Q465 447.5 473 440.5Z"/><path d="M473 423.5 Q469 418.0 461 418.0 Q444 420.5 429 435.0 Q435 439.5 440 438.0 Q444 442.5 450 441.0 Q454 445.5 460 443.5 Q465 447.5 473 440.5Z" transform="translate(972 0) scale(-1 1)"/></g><path d="M482.69 407.23 L483.38 401.12 L488.62 401.12 L489.31 407.23 L494.77 408.7 L498.42 403.74 L502.96 406.36 L500.5 412.01 L504.49 416 L510.14 413.54 L512.76 418.08 L507.8 421.73 L509.27 427.19 L515.38 427.88 L515.38 433.12 L509.27 433.81 L507.8 439.27 L512.76 442.92 L510.14 447.46 L504.49 445 L500.5 448.99 L502.96 454.64 L498.42 457.26 L494.77 452.3 L489.31 453.77 L488.62 459.88 L483.38 459.88 L482.69 453.77 L477.23 452.3 L473.58 457.26 L469.04 454.64 L471.5 448.99 L467.51 445 L461.86 447.46 L459.24 442.92 L464.2 439.27 L462.73 433.81 L456.62 433.12 L456.62 427.88 L462.73 427.19 L464.2 421.73 L459.24 418.08 L461.86 413.54 L467.51 416 L471.5 412.01 L469.04 406.36 L473.58 403.74 L477.23 408.7Z" fill="#0a0a0a"/><path d="M483.04 409.71 L483.67 404.4 L488.33 404.4 L488.96 409.71 L493.83 411.02 L497.03 406.74 L501.07 409.06 L498.96 413.97 L502.53 417.54 L507.44 415.43 L509.76 419.47 L505.48 422.67 L506.79 427.54 L512.1 428.17 L512.1 432.83 L506.79 433.46 L505.48 438.33 L509.76 441.53 L507.44 445.57 L502.53 443.46 L498.96 447.03 L501.07 451.94 L497.03 454.26 L493.83 449.98 L488.96 451.29 L488.33 456.6 L483.67 456.6 L483.04 451.29 L478.17 449.98 L474.97 454.26 L470.93 451.94 L473.04 447.03 L469.47 443.46 L464.56 445.57 L462.24 441.53 L466.52 438.33 L465.21 433.46 L459.9 432.83 L459.9 428.17 L465.21 427.54 L466.52 422.67 L462.24 419.47 L464.56 415.43 L469.47 417.54 L473.04 413.97 L470.93 409.06 L474.97 406.74 L478.17 411.02Z" fill="none" stroke="#fff" stroke-width="1.200" stroke-linejoin="round"/><circle cx="486" cy="430.5" r="18.500" fill="#0a0a0a"/><circle cx="486" cy="430.5" r="16.200" fill="#fff"/><circle cx="486" cy="430.5" r="13.300" fill="none" stroke="#111" stroke-width="1.600"/><g stroke="#0f2a33" stroke-width="1"><path d="M473 423.5 Q469 418.0 461 418.0 Q444 420.5 429 435.0 Q435 439.5 440 438.0 Q444 442.5 450 441.0 Q454 445.5 460 443.5 Q465 447.5 473 440.5Z" fill="#4b9bb0"/><path d="M439 437.5Q448 427.5 470 424.5" stroke="#2f7488" stroke-width="1.200" fill="none"/><path d="M449 440.3Q455 430.5 469.5 429" stroke="#2f7488" stroke-width="1.200" fill="none"/><path d="M459 443.1Q462 433.5 469 433.5" stroke="#2f7488" stroke-width="1.200" fill="none"/><g transform="translate(972 0) scale(-1 1)"><path d="M473 423.5 Q469 418.0 461 418.0 Q444 420.5 429 435.0 Q435 439.5 440 438.0 Q444 442.5 450 441.0 Q454 445.5 460 443.5 Q465 447.5 473 440.5Z" fill="#4b9bb0"/><path d="M439 437.5Q448 427.5 470 424.5" stroke="#2f7488" stroke-width="1.200" fill="none"/><path d="M449 440.3Q455 430.5 469.5 429" stroke="#2f7488" stroke-width="1.200" fill="none"/><path d="M459 443.1Q462 433.5 469 433.5" stroke="#2f7488" stroke-width="1.200" fill="none"/></g></g><path d="M474 422.5h24l2 4.500-2 10h-24l-2-10z" fill="#0a0a0a"/><text x="485.5" y="437" text-anchor="middle" font-family="Liberation Serif,serif" font-weight="bold" font-size="19" fill="#55a9bf" stroke="#55a9bf" stroke-width=".4" letter-spacing="-1">JX</text><g stroke-linejoin="round" transform="translate(0 441.500) scale(1 .845) translate(0 -441.500)"><text class="t" x="542.5" y="438" font-size="42" font-weight="bold" letter-spacing="3.2" stroke="#fff" stroke-width="7.4" fill="#fff">机械帝国</text><text class="t" x="542.5" y="438" font-size="42" font-weight="bold" letter-spacing="3.2" stroke="#17323c" stroke-width="3.56" fill="#17323c">机械帝国</text><text class="t" x="542.5" y="438" font-size="42" font-weight="bold" letter-spacing="3.2" stroke="#4b9bb0" stroke-width="0.99" fill="#4b9bb0">机械帝国</text><clipPath id="wmclip"><text class="t" x="542.5" y="438" font-size="42" font-weight="bold" letter-spacing="3.2">机械帝国</text></clipPath><path d="M556 398L726 398L726 436Z" fill="#a9d6e0" clip-path="url(#wmclip)"/></g><text x="543" y="459.300" font-family="Liberation Sans,sans-serif" font-weight="bold" font-size="18.500" textLength="177" lengthAdjust="spacingAndGlyphs" fill="#fff" stroke="#fff" stroke-width="5" stroke-linejoin="round">JXDIGUO.COM</text><text x="543" y="459.300" font-family="Liberation Sans,sans-serif" font-weight="bold" font-size="18.500" textLength="177" lengthAdjust="spacingAndGlyphs" fill="#fff" stroke="#222b30" stroke-width="2.400" stroke-linejoin="round">JXDIGUO.COM</text><text x="543" y="459.300" font-family="Liberation Sans,sans-serif" font-weight="bold" font-size="18.500" textLength="177" lengthAdjust="spacingAndGlyphs" fill="#fff">JXDIGUO.COM</text></g><path d="M933 466.5 L964 466.5" stroke="#ffffff" stroke-width="1" fill="none"/><path d="M961.5 439 L961.5 495" stroke="#ffffff" stroke-width="1" fill="none"/><rect x="953.5" y="459" width="8.500" height="15" stroke="#ffffff" fill="none" stroke-width="1"/></svg>
<div class="a" style="left:346px;top:310px;width:27px;height:384px;background:#ece9d8;border-right:1px solid #fff"></div>
<div class="a" style="left:349px;top:313px;width:21px;height:2px;border-top:1px solid #fff;border-bottom:1px solid #aca899"></div>
<div class="a" style="left:349px;top:316px;width:21px;height:2px;border-top:1px solid #fff;border-bottom:1px solid #aca899"></div>
<div class="a" style="left:986px;top:313px;width:21px;height:2px;border-top:1px solid #fff;border-bottom:1px solid #aca899"></div>
<div class="a" style="left:986px;top:316px;width:21px;height:2px;border-top:1px solid #fff;border-bottom:1px solid #aca899"></div>
<svg class="a" style="left:350px;top:322px" width="16" height="16" viewBox="0 0 16 16"><path d="M2 14l12-12" stroke="#222" stroke-width="1.400"/><rect x="12.500" y="0.5" width="3" height="3" fill="#2f6ab8"/><rect x="0.5" y="12.500" width="3" height="3" fill="#2f6ab8"/></svg><svg class="a" style="left:350px;top:344px" width="16" height="16" viewBox="0 0 16 16"><path d="M2.500 13.500l11-11" stroke="#111" stroke-width="1.600"/><path d="M15.500 .5l-1.500 5-3.500-3.500zM.5 15.500l1.500-5 3.500 3.500z" fill="#111"/><rect x="6.750" y="6.750" width="2.500" height="2.500" fill="#2f6ab8"/></svg><svg class="a" style="left:350px;top:366px" width="16" height="16" viewBox="0 0 16 16"><path d="M2 11.500h9q3.500-.5 3.500-4t-4-4" stroke="#8a5a3a" stroke-width="1.400" fill="none"/><path d="M2 11.500h9" stroke="#2f4f8f" stroke-width="1.400"/><rect x="0.5" y="10" width="3" height="3" fill="#2f6ab8"/><rect x="9.500" y="10" width="3" height="3" fill="#2f6ab8"/><rect x="9" y="2" width="3" height="3" fill="#2f6ab8"/></svg><svg class="a" style="left:350px;top:388px" width="16" height="16" viewBox="0 0 16 16"><defs><linearGradient id="sg" x1="0" y1="0" x2="1" y2="1"><stop offset="0" stop-color="#fff"/><stop offset="1" stop-color="#b8cbe8"/></linearGradient></defs><path d="M8 1.500l6.500 5-2.500 7.500h-8l-2.500-7.500z" fill="url(#sg)" stroke="#222" stroke-width="1.400"/></svg><svg class="a" style="left:350px;top:410px" width="16" height="16" viewBox="0 0 16 16"><defs><linearGradient id="sg" x1="0" y1="0" x2="1" y2="1"><stop offset="0" stop-color="#fff"/><stop offset="1" stop-color="#b8cbe8"/></linearGradient></defs><rect x="2" y="4" width="12.500" height="8.500" fill="url(#sg)" stroke="#222" stroke-width="1.400"/><rect x="0.5" y="11" width="3" height="3" fill="#2f6ab8"/><rect x="13" y="2.500" width="3" height="3" fill="#2f6ab8"/></svg><svg class="a" style="left:350px;top:432px" width="16" height="16" viewBox="0 0 16 16"><path d="M2 14.500q0-11 12.500-12" stroke="#222" stroke-width="1.400" fill="none"/><rect x="0.5" y="13" width="3" height="3" fill="#2f6ab8"/><rect x="3.500" y="5.500" width="3" height="3" fill="#2f6ab8"/><rect x="13" y="1" width="3" height="3" fill="#2f6ab8"/></svg><svg class="a" style="left:350px;top:454px" width="16" height="16" viewBox="0 0 16 16"><defs><linearGradient id="sg" x1="0" y1="0" x2="1" y2="1"><stop offset="0" stop-color="#fff"/><stop offset="1" stop-color="#b8cbe8"/></linearGradient></defs><circle cx="8" cy="8" r="6.800" fill="url(#sg)" stroke="#222" stroke-width="1.500"/><path d="M8 8l4.500-4.500" stroke="#2f6ab8" stroke-width="1.200"/><rect x="6.750" y="6.750" width="2.500" height="2.500" fill="#2f6ab8"/></svg><svg class="a" style="left:350px;top:476px" width="16" height="16" viewBox="0 0 16 16"><defs><linearGradient id="sg" x1="0" y1="0" x2="1" y2="1"><stop offset="0" stop-color="#fff"/><stop offset="1" stop-color="#b8cbe8"/></linearGradient></defs><path d="M4 7q-3-1-2-3.500t4-1.500q1-2.500 4-2t3 3q2.500 1 1.500 3.500t-2.500 2.500q1 3-1.500 4t-4-.5q-2.500 1.500-4-.5t.5-4z" fill="url(#sg)" stroke="#222" stroke-width="1.300" transform="translate(.5 1) scale(.95)"/></svg><svg class="a" style="left:350px;top:498px" width="16" height="16" viewBox="0 0 16 16"><path d="M1.500 12.500q2-8 6-5t7-6" stroke="#222" stroke-width="1.400" fill="none"/></svg><svg class="a" style="left:350px;top:520px" width="16" height="16" viewBox="0 0 16 16"><defs><linearGradient id="sg" x1="0" y1="0" x2="1" y2="1"><stop offset="0" stop-color="#fff"/><stop offset="1" stop-color="#b8cbe8"/></linearGradient></defs><ellipse cx="8" cy="8" rx="6.800" ry="4.500" fill="url(#sg)" stroke="#222" stroke-width="1.500"/><rect x="6.750" y="2.250" width="2.500" height="2.500" fill="#2f6ab8"/><rect x="0.250" y="6.750" width="2.500" height="2.500" fill="#2f6ab8"/><rect x="13.250" y="6.750" width="2.500" height="2.500" fill="#2f6ab8"/></svg><svg class="a" style="left:350px;top:542px" width="16" height="16" viewBox="0 0 16 16"><path d="M3 9q-1-6 5-6.500t6.500 4.500q-.5 4.500-6 4.500" stroke="#222" stroke-width="1.500" fill="none"/><circle cx="8" cy="10.500" r="2.300" fill="#cfe6ff" stroke="#2a6fc0" stroke-width="1.100"/><rect x="1.750" y="7.750" width="2.500" height="2.500" fill="#2f6ab8"/></svg><svg class="a" style="left:350px;top:564px" width="16" height="16" viewBox="0 0 16 16"><defs><linearGradient id="sg" x1="0" y1="0" x2="1" y2="1"><stop offset="0" stop-color="#fff"/><stop offset="1" stop-color="#b8cbe8"/></linearGradient></defs><path d="M5 1h7l3 3v8h-10z" fill="url(#sg)" stroke="#5a7ab8" stroke-width="1"/><rect x="1" y="6" width="8" height="5.500" fill="#e8e8a0" stroke="#2a3f8f" stroke-width="1"/><circle cx="9.500" cy="12" r="3.300" fill="#e0e070" stroke="#2a3f8f" stroke-width="1"/><path d="M16 11.500v4.500h-4.500z" fill="#000"/></svg><svg class="a" style="left:350px;top:586px" width="16" height="16" viewBox="0 0 16 16"><rect x="3" y="3" width="8.500" height="6" fill="#e8e8a0" stroke="#2a3f8f" stroke-width="1.100"/><circle cx="11" cy="11" r="3.600" fill="#e0e070" stroke="#2a3f8f" stroke-width="1.100"/><rect x="1.750" y="7.750" width="2.500" height="2.500" fill="#2f6ab8"/></svg><svg class="a" style="left:350px;top:608px" width="16" height="16" viewBox="0 0 16 16"><rect x="6.500" y="7" width="3" height="3" fill="#2f4a8f"/></svg><svg class="a" style="left:350px;top:630px" width="16" height="16" viewBox="0 0 16 16"><clipPath id="hb"><rect x="3.500" y="3.500" width="9" height="9"/></clipPath><g clip-path="url(#hb)"><path d="M6 0l-14 14" stroke="#3a5a8f" stroke-width="1"/><path d="M8.500 0l-14 14" stroke="#3a5a8f" stroke-width="1"/><path d="M11 0l-14 14" stroke="#3a5a8f" stroke-width="1"/><path d="M13.500 0l-14 14" stroke="#3a5a8f" stroke-width="1"/><path d="M16 0l-14 14" stroke="#3a5a8f" stroke-width="1"/><path d="M18.500 0l-14 14" stroke="#3a5a8f" stroke-width="1"/><path d="M21 0l-14 14" stroke="#3a5a8f" stroke-width="1"/><path d="M23.500 0l-14 14" stroke="#3a5a8f" stroke-width="1"/></g><path d="M3.500 0v16M12.500 0v16M0 3.500h16M0 12.500h16" stroke="#2a4a8f" stroke-width="1.400"/></svg><svg class="a" style="left:350px;top:652px" width="16" height="16" viewBox="0 0 16 16"><defs><linearGradient id="gh" x1="0" y1="0" x2="1" y2="1"><stop offset="0" stop-color="#1a1a2a"/><stop offset="1" stop-color="#c8c8a8"/></linearGradient></defs><rect x="3.500" y="3.500" width="9" height="9" fill="url(#gh)"/><path d="M3.500 0v16M12.500 0v16M0 3.500h16M0 12.500h16" stroke="#1a1a2a" stroke-width="1.500"/></svg><svg class="a" style="left:350px;top:674px" width="16" height="16" viewBox="0 0 16 16"><defs><linearGradient id="sg" x1="0" y1="0" x2="1" y2="1"><stop offset="0" stop-color="#fff"/><stop offset="1" stop-color="#b8cbe8"/></linearGradient></defs><path d="M1 1.500h10l4 4.500v8.500h-14z" fill="url(#sg)" stroke="#2a4a8f" stroke-width="1.300"/><circle cx="7.500" cy="8.500" r="3.300" fill="#e8f0fc" stroke="#2a4a8f" stroke-width="1.200"/></svg><svg class="a" style="left:988px;top:322px" width="16" height="16" viewBox="0 0 16 16"><path d="M9 8l5-7 2 1.500-4.500 7z" fill="#f0d838" stroke="#8a7a20" stroke-width=".6"/><path d="M9 8l2.500 1.800-2 2.700-3.500-1z" fill="#e8a898" stroke="#8a4a3a" stroke-width=".6"/><path d="M0 13.500h16" stroke="#444" stroke-width="1.200"/><path d="M2 13q3-3 5-2" stroke="#444" stroke-width="1" fill="none"/></svg><svg class="a" style="left:988px;top:344px" width="16" height="16" viewBox="0 0 16 16"><circle cx="4.500" cy="5" r="3.200" fill="none" stroke="#222" stroke-width="1.400"/><circle cx="11" cy="11.500" r="3.500" fill="#e8f0fc" stroke="#222" stroke-width="1.400"/><path d="M8 3q4-1 5.500 3" stroke="#222" stroke-width="1.300" fill="none"/><path d="M15 5l-1.500 2.500-1.800-2z" fill="#222"/></svg><svg class="a" style="left:988px;top:366px" width="16" height="16" viewBox="0 0 16 16"><path d="M6.500 2v12.500h-5.500zM9.500 2v12.500h5.500z" fill="#f4f7fc" stroke="#222" stroke-width="1.200"/><path d="M8 0v16" stroke="#2a5a9f" stroke-width="1.200"/></svg><svg class="a" style="left:988px;top:388px" width="16" height="16" viewBox="0 0 16 16"><path d="M1 14.500h14v-4h-6q2-1 2-4t-3.500-3-3.500 3q0 2.500 1.500 3.500h-4.500z" fill="#e8f0fc" stroke="#222" stroke-width="1.300"/><path d="M3.500 12.500h9" stroke="#2a5a9f" stroke-width="1.100"/><path d="M6 10.500q-1.500-1.500-1-4" stroke="#2a5a9f" stroke-width="1" fill="none"/></svg><svg class="a" style="left:988px;top:410px" width="16" height="16" viewBox="0 0 16 16"><rect x="1" y="1" width="5.500" height="5.500" fill="#fff" stroke="#222" stroke-width="1.400"/><rect x="9.500" y="1" width="5.500" height="5.500" fill="#fff" stroke="#222" stroke-width="1.400"/><rect x="1" y="9.500" width="5.500" height="5.500" fill="#fff" stroke="#222" stroke-width="1.400"/><rect x="9.500" y="9.500" width="5.500" height="5.500" fill="#fff" stroke="#222" stroke-width="1.400"/></svg><svg class="a" style="left:988px;top:432px" width="16" height="16" viewBox="0 0 16 16"><path d="M8 1.500v13M1.500 8h13" stroke="#2a5a9f" stroke-width="1.800"/><path d="M8 0l-2.800 3.500h5.600zM8 16l-2.800-3.500h5.600zM0 8l3.500-2.800v5.600zM16 8l-3.500-2.800v5.600z" fill="#2a5a9f"/></svg><svg class="a" style="left:988px;top:454px" width="16" height="16" viewBox="0 0 16 16"><path d="M12.500 4.500a6 6 0 1 1-5-2.300" stroke="#2a4a7f" stroke-width="2" fill="none"/><path d="M6 0l4.500 2.500-4 3z" fill="#2a4a7f"/></svg><svg class="a" style="left:988px;top:476px" width="16" height="16" viewBox="0 0 16 16"><defs><linearGradient id="sg" x1="0" y1="0" x2="1" y2="1"><stop offset="0" stop-color="#fff"/><stop offset="1" stop-color="#b8cbe8"/></linearGradient></defs><path d="M1 .7h14.300v14.300h-6" fill="url(#sg)" stroke="#5a6a88" stroke-width="1.200"/><rect x="1" y="7" width="8" height="8" fill="#f4f6fa" stroke="#222" stroke-width="1.300" stroke-dasharray="1.400 1.300"/></svg><svg class="a" style="left:988px;top:498px" width="16" height="16" viewBox="0 0 16 16"><path d="M1.500 1.500h6l7 13h-13z" fill="#e8f0fc" stroke="#222" stroke-width="1.300"/><path d="M5.500 3v11" stroke="#222" stroke-width="1.100" stroke-dasharray="1.500 1.300"/></svg><svg class="a" style="left:988px;top:520px" width="16" height="16" viewBox="0 0 16 16"><path d="M0 9h6" stroke="#222" stroke-width="1.400"/><path d="M7.500 9h8.500" stroke="#2a5a9f" stroke-width="1.400" stroke-dasharray="2 1.300"/><path d="M4.500 14.500l6-12.500" stroke="#2a5a9f" stroke-width="1.300"/></svg><svg class="a" style="left:988px;top:542px" width="16" height="16" viewBox="0 0 16 16"><path d="M0 9h6" stroke="#222" stroke-width="1.400" stroke-dasharray="3 1.200"/><path d="M7 9h4" stroke="#222" stroke-width="1.400"/><path d="M9.500 14.500l6-12.500" stroke="#2a5a9f" stroke-width="1.400"/></svg><svg class="a" style="left:988px;top:564px" width="16" height="16" viewBox="0 0 16 16"><defs><linearGradient id="sg" x1="0" y1="0" x2="1" y2="1"><stop offset="0" stop-color="#fff"/><stop offset="1" stop-color="#b8cbe8"/></linearGradient></defs><rect x="1" y="3" width="14" height="10.500" fill="url(#sg)" stroke="#222" stroke-width="1.400"/><rect x="9" y="1.800" width="2.500" height="2.500" fill="#556"/></svg><svg class="a" style="left:988px;top:586px" width="16" height="16" viewBox="0 0 16 16"><defs><linearGradient id="sg" x1="0" y1="0" x2="1" y2="1"><stop offset="0" stop-color="#fff"/><stop offset="1" stop-color="#b8cbe8"/></linearGradient></defs><path d="M5 3h-4v10.500h14v-10.500h-4" fill="url(#sg)" stroke="#222" stroke-width="1.400"/><rect x="3.500" y="2" width="2.500" height="2.500" fill="#556"/><rect x="10" y="2" width="2.500" height="2.500" fill="#556"/></svg><svg class="a" style="left:988px;top:608px" width="16" height="16" viewBox="0 0 16 16"><path d="M0 8h16" stroke="#111" stroke-width="1.600"/><path d="M4 5l4 3-4 3zM12 5l-4 3 4 3z" fill="#2a4a6f"/></svg><svg class="a" style="left:988px;top:630px" width="16" height="16" viewBox="0 0 16 16"><path d="M1.500 15v-7l7-6.500h7" stroke="#222" stroke-width="1.400" fill="none"/><path d="M1.500 8v-6.500h7" stroke="#222" stroke-width="1.100" fill="none" stroke-dasharray="1.200 1.200"/><path d="M2.500 8.500l6-6" stroke="#7aa0d8" stroke-width="1.500"/></svg><svg class="a" style="left:988px;top:652px" width="16" height="16" viewBox="0 0 16 16"><path d="M1.500 15v-5q0-8.500 8.500-8.500h5.500" stroke="#222" stroke-width="1.400" fill="none"/><path d="M1.500 9v-7.500h8" stroke="#222" stroke-width="1.100" fill="none" stroke-dasharray="1.200 1.200"/><path d="M2.800 9q.5-6 6.500-6.500" stroke="#7aa0d8" stroke-width="1.500" fill="none"/></svg><svg class="a" style="left:988px;top:674px" width="16" height="16" viewBox="0 0 16 16"><path d="M13 1l2 2-6 7-3-2z" fill="#d8dce4" stroke="#7a808c" stroke-width=".7"/><path d="M6 8l3 2-2.500 2.500-2.500-1.500z" fill="#e03020"/><path d="M4 11l-3 4M6.500 12.500l0 3M2.500 9.500l-2.500.5M5 13.500l-2 2" stroke="#e8a020" stroke-width="1.300"/><circle cx="3" cy="13" r="1.300" fill="#e03020"/><circle cx="6" cy="14.500" r="1" fill="#e03020"/></svg>
<div class="a" style="left:964px;top:310px;width:17px;height:368px;background:linear-gradient(to right,#f3f1ec,#fefefb 50%,#fefefb)"></div>
<svg class="a" style="left:964px;top:310px" width="17" height="16" viewBox="0 0 17 16"><rect x=".5" y=".5" width="16" height="15" rx="2" fill="#c3d3fa" stroke="#b5c8f5"/><rect x="1.500" y="1.500" width="14" height="13" rx="1.500" fill="none" stroke="#dfe8fd" stroke-width="1"/><path d="M4.500 10l4-4 4 4" fill="none" stroke="#4d6185" stroke-width="2.200"/></svg>
<svg class="a" style="left:964px;top:661px" width="17" height="16" viewBox="0 0 17 16"><rect x=".5" y=".5" width="16" height="15" rx="2" fill="#c3d3fa" stroke="#b5c8f5"/><rect x="1.500" y="1.500" width="14" height="13" rx="1.500" fill="none" stroke="#dfe8fd" stroke-width="1"/><path d="M4.500 6l4 4 4-4" fill="none" stroke="#4d6185" stroke-width="2.200"/></svg>
<svg class="a" style="left:964px;top:486px" width="17" height="16" viewBox="0 0 17 16"><rect x=".5" y=".5" width="16" height="15" rx="2" fill="#c8d6fb" stroke="#a9bdf0"/><path d="M5 4.500h7" stroke="#eef3fe" stroke-width="1"/><path d="M5 5.500h7" stroke="#8ca6e4" stroke-width="1"/><path d="M5 6.500h7" stroke="#eef3fe" stroke-width="1"/><path d="M5 7.500h7" stroke="#8ca6e4" stroke-width="1"/><path d="M5 8.500h7" stroke="#eef3fe" stroke-width="1"/><path d="M5 9.500h7" stroke="#8ca6e4" stroke-width="1"/><path d="M5 10.500h7" stroke="#eef3fe" stroke-width="1"/><path d="M5 11.500h7" stroke="#8ca6e4" stroke-width="1"/></svg>
<div class="a" style="left:374px;top:677px;width:590px;height:17px;background:#ece9d8"></div>
<div class="a" style="left:374px;top:678px;width:58px;height:15px;background:#f1efe2;border:1px solid #d5d2c3"></div>
<svg class="a" style="left:376px;top:679px" width="14" height="13" viewBox="0 0 14 13"><path d="M4 2v9M10 2.500l-5 4 5 4z" fill="#bbb8a8" stroke="#aca899" stroke-width="1"/></svg>
<svg class="a" style="left:390px;top:679px" width="14" height="13" viewBox="0 0 14 13"><path d="M10 2.500l-5 4 5 4z" fill="#bbb8a8" stroke="#aca899" stroke-width="1"/></svg>
<svg class="a" style="left:404px;top:679px" width="14" height="13" viewBox="0 0 14 13"><path d="M5 2.500l5 4-5 4z" fill="#bbb8a8" stroke="#aca899" stroke-width="1"/></svg>
<svg class="a" style="left:418px;top:679px" width="14" height="13" viewBox="0 0 14 13"><path d="M10 2v9M4 2.500l5 4-5 4z" fill="#bbb8a8" stroke="#aca899" stroke-width="1"/></svg>
<svg class="a" style="left:430px;top:677px" width="95" height="17" viewBox="0 0 95 17"><path d="M0 0h47l-5 15h-37z" fill="#000"/><path d="M43.500 14.500l5-13.500h42l-6 13.500" fill="#f4f2e8" stroke="#55534a" stroke-width="1"/></svg>
<svg class="a" style="left:441px;top:679px" width="26" height="15" overflow="visible" aria-label="模型"><text class="t" x="0" y="10.5" font-size="12" fill="#fff">模型</text></svg>
<svg class="a" style="left:481px;top:679px" width="26" height="15" overflow="visible" aria-label="布局"><text class="t" x="0" y="10.5" font-size="12" fill="#000">布局</text></svg><span class="m" style="left:505px;top:680px;font-size:12px;color:#000;transform:scaleX(0.8333)">1</span>
<div class="a" style="left:768px;top:678px;width:196px;height:15px;background:linear-gradient(#f3f1ec,#fefefb 50%)"></div>
<div class="a" style="left:765px;top:678px;width:3px;height:15px;border-left:1px solid #fff;border-right:1px solid #aca899;background:#ece9d8"></div>
<svg class="a" style="left:769px;top:678px" width="17" height="15" viewBox="0 0 17 15"><rect x=".5" y=".5" width="16" height="14" rx="2" fill="#c3d3fa" stroke="#b5c8f5"/><rect x="1.500" y="1.500" width="14" height="12" rx="1.500" fill="none" stroke="#dfe8fd" stroke-width="1"/><path d="M10.500 3.500l-4 4 4 4" fill="none" stroke="#4d6185" stroke-width="2.200"/></svg>
<svg class="a" style="left:947px;top:678px" width="17" height="15" viewBox="0 0 17 15"><rect x=".5" y=".5" width="16" height="14" rx="2" fill="#c3d3fa" stroke="#b5c8f5"/><rect x="1.500" y="1.500" width="14" height="12" rx="1.500" fill="none" stroke="#dfe8fd" stroke-width="1"/><path d="M6.500 3.500l4 4-4 4" fill="none" stroke="#4d6185" stroke-width="2.200"/></svg>
<svg class="a" style="left:859px;top:678px" width="16" height="15" viewBox="0 0 16 15"><rect x=".5" y=".5" width="15" height="14" rx="2" fill="#c8d6fb" stroke="#a9bdf0"/><path d="M4.500 4v7" stroke="#eef3fe" stroke-width="1"/><path d="M5.500 4v7" stroke="#8ca6e4" stroke-width="1"/><path d="M6.500 4v7" stroke="#eef3fe" stroke-width="1"/><path d="M7.500 4v7" stroke="#8ca6e4" stroke-width="1"/><path d="M8.500 4v7" stroke="#eef3fe" stroke-width="1"/><path d="M9.500 4v7" stroke="#8ca6e4" stroke-width="1"/><path d="M10.500 4v7" stroke="#eef3fe" stroke-width="1"/><path d="M11.500 4v7" stroke="#8ca6e4" stroke-width="1"/></svg>
<div class="a" style="left:346px;top:697px;width:663px;height:3px;border-top:1px solid #fff;border-bottom:1px solid #000;background:#ece9d8"></div>
<div class="a" style="left:346px;top:700px;width:663px;height:36px;background:#ece9d8"></div>
<div class="a" style="left:352px;top:705px;width:2px;height:26px;border-left:1px solid #fff;border-right:1px solid #aca899"></div><div class="a" style="left:355px;top:705px;width:2px;height:26px;border-left:1px solid #fff;border-right:1px solid #aca899"></div>
<div class="a" style="left:362px;top:709px;width:623px;height:25px;background:#fff;border-top:2px solid #000;border-left:2px solid #000;border-bottom:1px solid #d4d0c8"></div>
<svg class="a" style="left:366px;top:716px" width="34" height="16" overflow="visible" aria-label="命令"><text class="t" x="0" y="11.5" font-size="13" letter-spacing="3" fill="#000">命令</text></svg><span class="m" style="left:398px;top:715px;font-size:14px;color:#000;transform:scaleX(0.9524);font-weight:bold">:</span>
<div class="a" style="left:346px;top:735px;width:663px;height:22px;background:#ece9d8;border-top:1px solid #fff"></div>
<svg class="a" style="left:353px;top:743px" width="62" height="15" overflow="visible" aria-label="英科宇机械"><text class="t" x="0" y="10.5" font-size="12" fill="#000">英科宇机械</text></svg><span class="m" style="left:413px;top:744px;font-size:12px;color:#000;transform:scaleX(0.8333)">CAD2014</span>
<div class="a" style="left:460px;top:739px;width:205px;height:18px;border:1px solid #aca899;border-right-color:#fff;border-bottom-color:#fff;background:#ece9d8"></div>
<span class="m" style="left:463px;top:744px;font-size:12px;color:#000;transform:scaleX(0.8333)">625.8618, 234.4554, 0.0000</span>
<div class="a" style="left:669px;top:739px;width:28px;height:18px;border:1px solid #fff;border-right-color:#aca899;border-bottom-color:#aca899;background:#ece9d8"></div>
<svg class="a" style="left:671px;top:742px" width="26" height="15" overflow="visible" aria-label="捕捉"><text class="t" x="0" y="10.5" font-size="12" fill="#000">捕捉</text></svg>
<div class="a" style="left:701px;top:739px;width:28px;height:18px;border:1px solid #fff;border-right-color:#aca899;border-bottom-color:#aca899;background:#ece9d8"></div>
<svg class="a" style="left:703px;top:742px" width="26" height="15" overflow="visible" aria-label="栅格"><text class="t" x="0" y="10.5" font-size="12" fill="#000">栅格</text></svg>
<div class="a" style="left:733px;top:739px;width:28px;height:18px;border:1px solid #fff;border-right-color:#aca899;border-bottom-color:#aca899;background:#ece9d8"></div>
<svg class="a" style="left:735px;top:742px" width="26" height="15" overflow="visible" aria-label="正交"><text class="t" x="0" y="10.5" font-size="12" fill="#000">正交</text></svg>
<div class="a" style="left:765px;top:739px;width:28px;height:18px;border:1px solid #fff;border-right-color:#aca899;border-bottom-color:#aca899;background:#ece9d8"></div>
<svg class="a" style="left:767px;top:742px" width="26" height="15" overflow="visible" aria-label="极轴"><text class="t" x="0" y="10.5" font-size="12" fill="#000">极轴</text></svg>
<div class="a" style="left:797px;top:739px;width:52px;height:18px;border:1px solid #fff;border-right-color:#aca899;border-bottom-color:#aca899;background:#ece9d8"></div>
<svg class="a" style="left:799px;top:742px" width="50" height="15" overflow="visible" aria-label="对象捕捉"><text class="t" x="0" y="10.5" font-size="12" fill="#000">对象捕捉</text></svg>
<div class="a" style="left:853px;top:739px;width:53px;height:18px;border:1px solid #404040;border-right-color:#fff;border-bottom-color:#fff;background:#f4f2ea"></div>
<svg class="a" style="left:856px;top:743px" width="50" height="15" overflow="visible" aria-label="对象追踪"><text class="t" x="0" y="10.5" font-size="12" fill="#000">对象追踪</text></svg>
<div class="a" style="left:908px;top:739px;width:2px;height:18px;border-left:1px solid #404040;border-right:1px solid #fff"></div>
<svg class="a" style="left:914px;top:740px" width="16" height="16" viewBox="0 0 16 16"><path d="M8.500 7v-2.500q0-3 3-3t3 3v1" fill="none" stroke="#a89020" stroke-width="1.800"/><rect x="1.500" y="7" width="10" height="8" rx="1" fill="#e8d030" stroke="#5a4a10" stroke-width="1"/><path d="M3 9.500h7M3 12h7" stroke="#8a7a10" stroke-width="1"/></svg><svg class="a" style="left:934px;top:740px" width="16" height="16" viewBox="0 0 16 16"><path d="M1 1h9l2 2v11h-11z" fill="#3f6fb8" stroke="#1f3a7f" stroke-width=".8"/><path d="M4 12v-7M6.500 12v-4l2-3" stroke="#fff" stroke-width="1.200" fill="none"/><circle cx="4" cy="4" r="1.200" fill="#fff"/><circle cx="11.500" cy="11.500" r="4" fill="#30b040" stroke="#fff" stroke-width=".8"/><path d="M9.500 11.500l1.500 1.500 2.500-3" stroke="#fff" stroke-width="1.300" fill="none"/></svg><svg class="a" style="left:959px;top:747px" width="8" height="5" viewBox="0 0 8 5"><path d="M0 0h7l-3.500 4z" fill="#000"/></svg><div class="a" style="left:977px;top:739px;width:15px;height:12px;border:1px solid #24449a;background:linear-gradient(#fff 0,#fff 3px,#d4e0f4 3px)"></div>
<div class="a" style="left:984px;top:745px;width:170px;height:21px;background:linear-gradient(#fdfeff,#eef4fb);border:1px solid #c5d5e8;border-radius:2px"></div>
<svg class="a" style="left:965px;top:740px" width="32" height="30" viewBox="0 0 32 30"><g transform="rotate(-12 16 15)"><rect x="3.500" y="3.500" width="25" height="23" rx="4" fill="#ee5a2a"/><rect x="3.500" y="3.500" width="25" height="11" rx="4" fill="#f57c4a" opacity=".55"/><path d="M22.500 10q-3-2-7-1.500t-4 3q0 2 4.500 2.500t5 3q0 2.500-4.500 3t-7.500-1.500" fill="none" stroke="#fff" stroke-width="3.600" stroke-linecap="round"/></g></svg>
<svg class="a" style="left:1001px;top:748px" width="17.5" height="18.5" overflow="visible" aria-label="中"><text class="t" x="0" y="13" font-size="15" font-weight="bold" fill="#2b78c8">中</text></svg><svg class="a" style="left:1022px;top:747px" width="18" height="18" viewBox="0 0 18 18"><path d="M11 1.500a8 8 0 1 1-8.500 11a7 7 0 0 0 8.500-11z" fill="#2b78c8"/></svg><svg class="a" style="left:1044px;top:747px" width="18" height="18" viewBox="0 0 18 18"><circle cx="4.500" cy="6" r="1.800" fill="none" stroke="#2b78c8" stroke-width="1.400"/><path d="M11.500 9.500a2 2 0 1 1 2 2q0 2-2.500 3.500v-1q1.500-1 1.500-2.500" fill="#2b78c8" stroke="#2b78c8" stroke-width="1.500"/></svg><svg class="a" style="left:1066px;top:747px" width="19" height="18" viewBox="0 0 19 18"><rect x="1" y="3.500" width="17" height="11.500" rx="1.500" fill="#2b78c8"/><rect x="2.800" y="5.500" width="2" height="2" fill="#fff"/><rect x="5.800" y="5.500" width="2" height="2" fill="#fff"/><rect x="8.800" y="5.500" width="2" height="2" fill="#fff"/><rect x="11.800" y="5.500" width="2" height="2" fill="#fff"/><rect x="14.800" y="5.500" width="2" height="2" fill="#fff"/><rect x="2.800" y="8.500" width="2" height="2" fill="#fff"/><rect x="5.800" y="8.500" width="2" height="2" fill="#fff"/><rect x="8.800" y="8.500" width="2" height="2" fill="#fff"/><rect x="11.800" y="8.500" width="2" height="2" fill="#fff"/><rect x="14.800" y="8.500" width="2" height="2" fill="#fff"/><rect x="5" y="11.500" width="9" height="1.800" fill="#fff"/></svg><svg class="a" style="left:1088px;top:747px" width="18" height="18" viewBox="0 0 18 18"><circle cx="9" cy="5" r="3.200" fill="#c3cbd6"/><path d="M2.500 16q0-7 6.500-7t6.500 7z" fill="#c3cbd6"/></svg><svg class="a" style="left:1110px;top:747px" width="18" height="18" viewBox="0 0 18 18"><path d="M5.500 2l-4.500 3 2 3.500 1.500-.8v9h9v-9l1.500.8 2-3.500-4.500-3q-3.500 2.500-7 0z" fill="#2b78c8"/></svg><svg class="a" style="left:1132px;top:747px" width="18" height="18" viewBox="0 0 18 18"><path d="M15.500 1.500a4.500 4.500 0 0 0-5.500 6l-8 8 2 2 8-8a4.500 4.500 0 0 0 6-5.500l-2.800 2.800-2.200-.6-.6-2.200z" fill="#2b78c8"/></svg>
<div class="a" style="left:0px;top:832px;width:1152px;height:2px;background:#fff"></div>
<div class="a" style="left:0px;top:832px;width:210px;height:1px;background:#6577d6"></div>
<div class="a" style="left:0px;top:834px;width:1152px;height:30px;background:linear-gradient(to bottom,#1f2f86 0,#3165c4 3%,#3682e5 6%,#4490e6 10%,#3883e5 12%,#2b71e0 15%,#2663da 18%,#235bd6 20%,#2258d5 23%,#2157d6 38%,#245ddb 54%,#2562df 86%,#245fdc 89%,#2158d4 92%,#1d4ec0 95%,#1941a5 98%)"></div>
<div class="a" style="left:0px;top:834px;width:97px;height:30px;background:linear-gradient(to bottom,#2f7f2f 0%,#5eb35a 6%,#46a044 14%,#3a963a 30%,#3b993b 60%,#3c9e3c 80%,#2f8a30 94%,#226f25 100%);border-radius:0 10px 12px 0/0 14px 16px 0;box-shadow:inset -3px 0 4px #2a6d2a,2px 0 3px rgba(0,20,90,.5)"></div>
<svg class="a" style="left:10px;top:838px" width="21" height="21" viewBox="0 0 17 17"><g transform="skewY(-8) translate(0,2.5)"><path d="M1 2.500q3.500-2.400 7-.3v6q-3.500-2-7 .3z" fill="#e8562a"/><path d="M9 2.600q3.500 2 7-.3v6q-3.500 2.300-7 .3z" fill="#6fbf3f"/><path d="M1 9.500q3.500-2.400 7-.3v6q-3.500-2-7 .3z" fill="#3a78d8"/><path d="M9 9.600q3.500 2 7-.3v6q-3.500 2.300-7 .3z" fill="#f7c62f"/></g></svg>
<svg class="a" style="left:38.5px;top:837.5px" width="41" height="23" overflow="visible" aria-label="开始"><g fill="#fff" transform="skewX(-15)"><text class="t" x="0" y="17.5" font-size="20" font-weight="300" letter-spacing="-0.5" fill="#fff">开始</text></g></svg>
<svg class="a" style="left:109px;top:840px" width="17" height="17" viewBox="0 0 17 17"><rect x=".5" y=".5" width="16" height="13" fill="#3f92e6"/><path d="M3 9.500q-.5-3 3-3.500 2.500-.2 4.500 2t3.500 1.500q1.500-.8.5-2.500-.8-1.300-3-.8-1.500.5-3 2.500t-4 2q-2-.2-1.500-1.200z" fill="none" stroke="#fff" stroke-width="1.500"/><rect x=".5" y="14.500" width="16" height="2" fill="#e6edf8"/></svg>
<svg class="a" style="left:131px;top:839px" width="18" height="18" viewBox="0 0 16 16"><ellipse cx="8" cy="9" rx="5" ry="5.500" fill="#1a1a1a"/><circle cx="8" cy="4.500" r="3.600" fill="#1a1a1a"/><ellipse cx="8" cy="10" rx="3" ry="3.600" fill="#fff"/><ellipse cx="8" cy="6.200" rx="2.200" ry=".9" fill="#f5a623"/><circle cx="6.800" cy="4" r=".8" fill="#fff"/><circle cx="9.200" cy="4" r=".8" fill="#fff"/><path d="M3 8q5 2.500 10 0l.5 1.800q-5.500 2.500-11 0z" fill="#e0342a"/><path d="M1 13.500q3.500-2 7 0t7 0v2.500h-14z" fill="#5fb4ec"/><ellipse cx="5.500" cy="14.500" rx="2" ry=".9" fill="#f5a623"/><ellipse cx="10.500" cy="14.500" rx="2" ry=".9" fill="#f5a623"/></svg>
<svg class="a" style="left:155px;top:840px" width="17" height="17" viewBox="0 0 17 17"><rect x=".7" y=".7" width="15.600" height="15.600" fill="#2a86e6" stroke="#fff" stroke-width="1.400"/><circle cx="7.200" cy="7" r="3.600" fill="none" stroke="#fff" stroke-width="1.600"/><path d="M9.800 9.800l4 4.200" stroke="#fff" stroke-width="2"/></svg>
<span class="a" style="left:181px;top:834px;font:bold 13px 'Liberation Sans',sans-serif;color:#9fc3f8;letter-spacing:-1px">&raquo;</span>
<div class="a" style="left:199px;top:837px;width:158px;height:24px;background:linear-gradient(#5d9af6 0%,#3c81f3 12%,#3a7cee 50%,#3674e4 90%,#2c64d2 100%);border-radius:3px;box-shadow:inset 1px 1px 0 #78aefa,inset -1px -1px 1px #2456c0"></div>
<svg class="a" style="left:207px;top:840px" width="17" height="17" viewBox="0 0 17 17"><rect x=".5" y=".5" width="16" height="13" fill="#3f92e6"/><path d="M3 9.500q-.5-3 3-3.500 2.500-.2 4.500 2t3.500 1.500q1.500-.8.5-2.500-.8-1.300-3-.8-1.500.5-3 2.500t-4 2q-2-.2-1.500-1.200z" fill="none" stroke="#fff" stroke-width="1.500"/><rect x=".5" y="14.500" width="16" height="2" fill="#e6edf8"/></svg>
<span class="m" style="left:228px;top:844px;font-size:12px;color:#fff;transform:scaleX(0.9167);font-family:'Liberation Sans',sans-serif">360</span><svg class="a" style="left:247.8px;top:843px" width="26" height="15" overflow="visible" aria-label="云盘"><text class="t" x="0" y="10.5" font-size="12" fill="#fff">云盘</text></svg>
<div class="a" style="left:359px;top:837px;width:158px;height:24px;background:linear-gradient(#5d9af6 0%,#3c81f3 12%,#3a7cee 50%,#3674e4 90%,#2c64d2 100%);border-radius:3px;box-shadow:inset 1px 1px 0 #78aefa,inset -1px -1px 1px #2456c0"></div>
<svg class="a" style="left:368px;top:840px" width="17" height="17" viewBox="0 0 17 17"><circle cx="8.500" cy="8.500" r="7.500" fill="#3b78d8" stroke="#e8f0fc" stroke-width="1.600"/><path d="M11.500 4.500q-3.500-.5-4 2t2.500 3.500q1.500 1.500-.5 2.800t-4.500 0" fill="none" stroke="#fff" stroke-width="2.200"/></svg>
<svg class="a" style="left:388px;top:843px" width="74" height="15" overflow="visible" aria-label="用户控制面板"><text class="t" x="0" y="10.5" font-size="12" fill="#fff">用户控制面板</text></svg><span class="m" style="left:460px;top:844px;font-size:12px;color:#fff;transform:scaleX(0.8333)"> - ...</span>
<div class="a" style="left:519px;top:837px;width:158px;height:24px;background:linear-gradient(#5d9af6 0%,#3c81f3 12%,#3a7cee 50%,#3674e4 90%,#2c64d2 100%);border-radius:3px;box-shadow:inset 1px 1px 0 #78aefa,inset -1px -1px 1px #2456c0"></div>
<svg class="a" style="left:527px;top:840px" width="18" height="17" viewBox="0 0 18 17"><path d="M1.500 4q0-1.300 1.300-1.300h3.400l1.600 1.800h5.600q1.100 0 1.100 1.100v2.400h-13z" fill="#e8c560" stroke="#a67c24" stroke-width="1"/><path d="M.8 8h13.200l2.600-1.600v.6l-2.200 7.300h-12.600z" fill="#fbe48d" stroke="#a67c24" stroke-width="1"/><path d="M2 9h11.500" stroke="#fff8cf" stroke-width="1"/></svg>
<span class="m" style="left:548px;top:844px;font-size:12px;color:#fff;transform:scaleX(0.8333)">C:\Documents and...</span>
<div class="a" style="left:679px;top:837px;width:159px;height:24px;background:linear-gradient(#1b4fb4 0%,#1e52b7 40%,#2258c2 100%);border-radius:3px;box-shadow:inset 1px 1px 1px #143a90,inset -1px -1px 0 #3f72d4"></div>
<svg class="a" style="left:688px;top:841px" width="17" height="16" viewBox="0 0 17 16"><rect x="7" y="0" width="3" height="3" fill="#b0483a" transform="rotate(0 8.500 8)"/><rect x="7" y="0" width="3" height="3" fill="#b0483a" transform="rotate(45 8.500 8)"/><rect x="7" y="0" width="3" height="3" fill="#b0483a" transform="rotate(90 8.500 8)"/><rect x="7" y="0" width="3" height="3" fill="#b0483a" transform="rotate(135 8.500 8)"/><rect x="7" y="0" width="3" height="3" fill="#b0483a" transform="rotate(180 8.500 8)"/><rect x="7" y="0" width="3" height="3" fill="#b0483a" transform="rotate(225 8.500 8)"/><rect x="7" y="0" width="3" height="3" fill="#b0483a" transform="rotate(270 8.500 8)"/><rect x="7" y="0" width="3" height="3" fill="#b0483a" transform="rotate(315 8.500 8)"/><circle cx="8.500" cy="8" r="6" fill="#b0483a"/><circle cx="8.500" cy="8" r="4" fill="#e8e0dc"/><circle cx="8.500" cy="8" r="2.600" fill="#2b4f9a"/><circle cx="8.500" cy="8" r="1" fill="#fff"/></svg>
<svg class="a" style="left:709px;top:843px" width="62" height="15" overflow="visible" aria-label="机械工程师"><text class="t" x="0" y="10.5" font-size="12" fill="#fff">机械工程师</text></svg><span class="m" style="left:769px;top:844px;font-size:12px;color:#fff;transform:scaleX(0.8333)">CAD201...</span>
<svg class="a" style="left:1002px;top:841px" width="16" height="15" viewBox="0 0 16 15"><rect x=".7" y=".7" width="14.600" height="13.600" rx="1.500" fill="#e9562a" stroke="#fff" stroke-width="1.400"/><path d="M11.500 4.500q-2-1-4.500-.5t-2.200 1.800q.3 1.200 3.200 1.500t3 1.800q-.2 1.500-3 1.800t-4-.9" fill="none" stroke="#fff" stroke-width="2"/></svg>
<svg class="a" style="left:1025px;top:842px" width="14" height="15" viewBox="0 0 14 15"><path d="M.700 .700h12.600v10.600h-3.300l.5 3-3-3h-6.800z" fill="#fffbd8" stroke="#000" stroke-width="1.400"/><path d="M4.700 4.500q0-2 2.300-2t2.300 1.800q0 1.200-1.300 1.800t-1 1.600" fill="none" stroke="#000" stroke-width="1.700"/><rect x="6" y="8.300" width="1.800" height="1.600" fill="#000"/></svg>
<svg class="a" style="left:1048px;top:840px" width="12" height="18" viewBox="0 0 12 18"><path d="M4.500 1.500h5v4h-1.500M2.500 3.500h5v4h-5z" fill="none" stroke="#fff" stroke-width="1.200"/><path d="M3 14h5l-2.500 3z" fill="#fff"/></svg>
<div class="a" style="left:1075px;top:834px;width:77px;height:30px;background:linear-gradient(to bottom,#0c59b9 0,#139ee9 3%,#18b5f2 6%,#139beb 10%,#1290e8 14%,#0d8dea 19%,#0d9ff1 63%,#0f9eed 81%,#119be9 88%,#1392e2 91%,#137ed7 94%,#095bc9 100%);border-left:1px solid #1042af;box-shadow:inset 1px 0 1px #18bbff"></div>
<svg class="a" style="left:1064px;top:839px" width="22" height="22" viewBox="0 0 22 22"><defs><radialGradient id="trc" cx="35%" cy="30%" r="75%"><stop offset="0" stop-color="#7fc4ff"/><stop offset=".6" stop-color="#2f8ff0"/><stop offset="1" stop-color="#1a5fd0"/></radialGradient></defs><circle cx="11" cy="11" r="9.500" fill="url(#trc)" stroke="#9fd0ff" stroke-width="1"/><path d="M12.500 7l-4 4 4 4" fill="none" stroke="#fff" stroke-width="2.200"/></svg>
<svg class="a" style="left:1086px;top:840px" width="22" height="18" viewBox="0 0 22 18"><path d="M2 3.500h9l-.8 7.500h-7.400z" fill="#9ec4ea" stroke="#e8eef6" stroke-width="1"/><path d="M3.500 5h6.200l-.5 4.700h-5.200z" fill="#4f86cf"/><path d="M2 13.500h9.500l.8 2.500h-11z" fill="#d5dde8"/><path d="M13.500 3.500q1.500 2.500 0 5M16 2q2.500 4 0 8M18.500 .8q3 5.200 0 10.400" fill="none" stroke="#5fe05a" stroke-width="1.300"/></svg>
<span class="a" style="left:1109px;top:843px;font:12px 'Liberation Sans',sans-serif;color:#fff;letter-spacing:.3px">12:59</span>
</body></html>
